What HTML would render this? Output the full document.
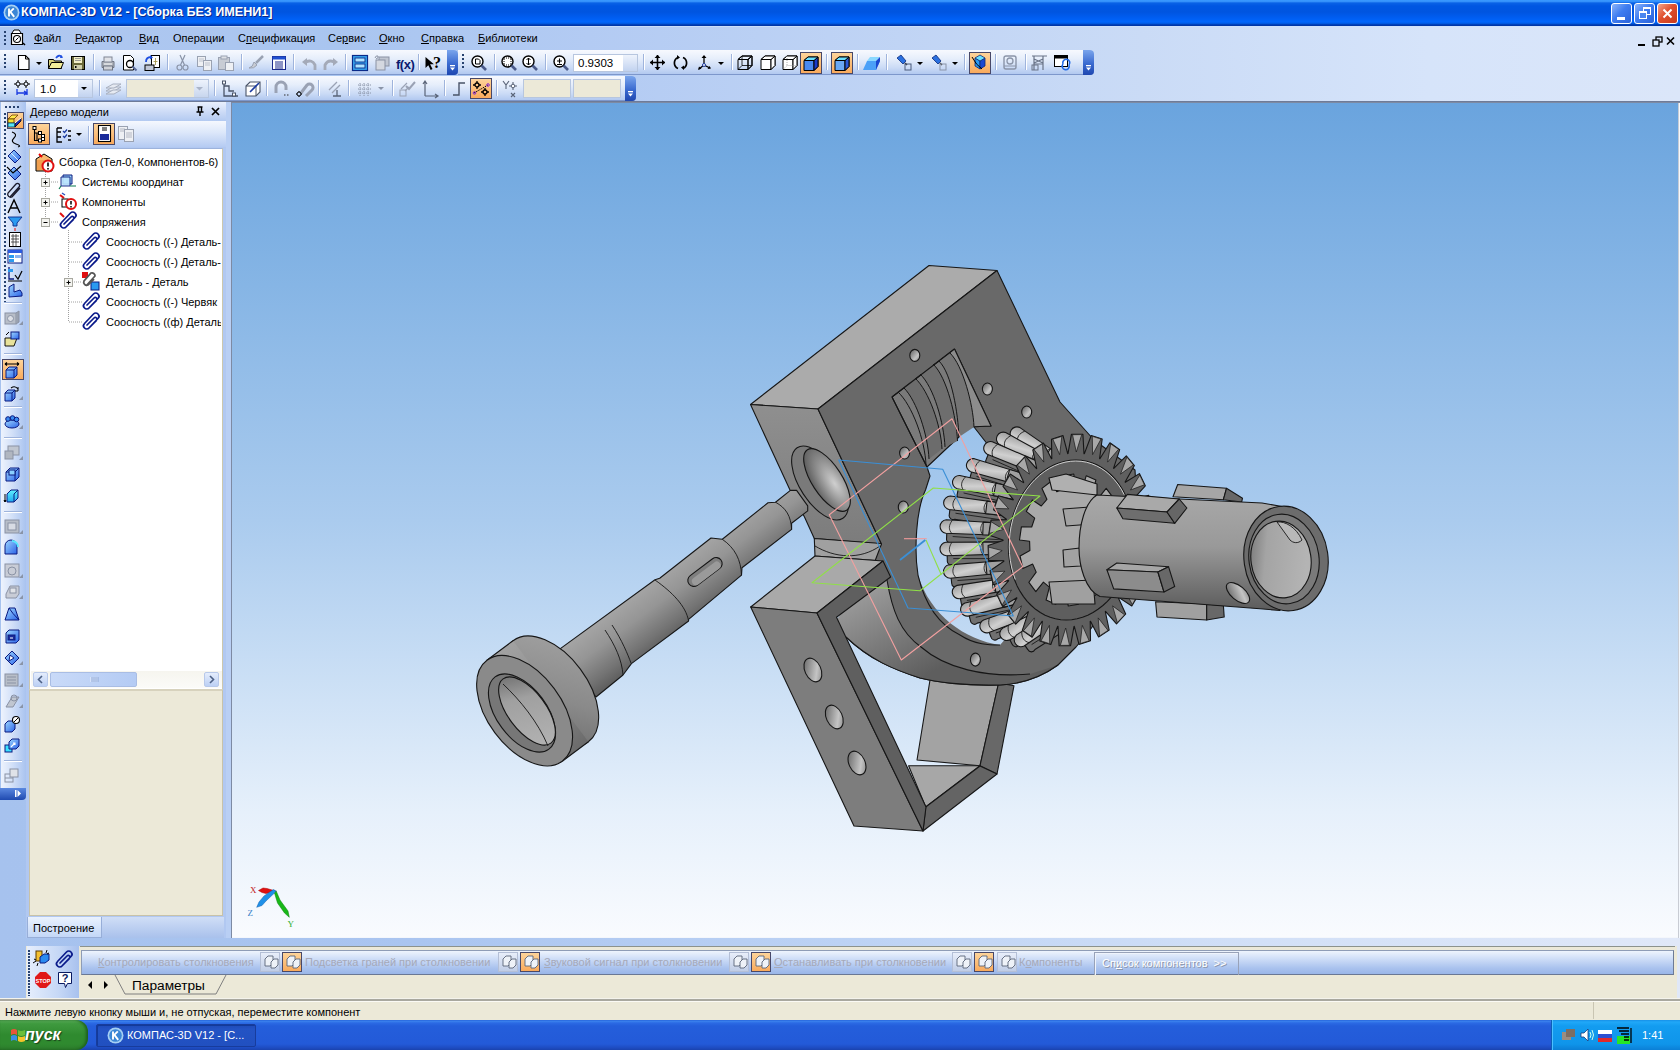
<!DOCTYPE html>
<html><head><meta charset="utf-8">
<style>
*{box-sizing:border-box;margin:0;padding:0}
html,body{width:1680px;height:1050px;overflow:hidden;background:#c9d9f4;font-family:"Liberation Sans",sans-serif;font-size:11px;color:#000}
.a{position:absolute}
.t{position:absolute;white-space:nowrap;line-height:1}
.tb{position:absolute;border-radius:0 4px 4px 0;background:linear-gradient(#f7f9fe 0,#e6eefb 35%,#cbdbf6 70%,#aec6ef 100%);box-shadow:inset 0 -1px #7d97cb}
.chev{position:absolute;width:11px;border-radius:0 4px 4px 0;background:linear-gradient(#7aa5ec,#3a6ad0 55%,#1f47b0)}
.sep{position:absolute;width:2px;height:16px;border-left:1px solid #9fb4dc;border-right:1px solid #fff}
.vsep{position:absolute;height:2px;width:18px;border-top:1px solid #9fb4dc;border-bottom:1px solid #fff}
.hl{position:absolute;background:linear-gradient(#fdd49a,#f9aa5c);border:1px solid #484868}
.gripv{position:absolute;width:2px;background:repeating-linear-gradient(#27426f 0 2px,transparent 2px 4px)}
.griph{position:absolute;height:2px;background:repeating-linear-gradient(90deg,#27426f 0 2px,transparent 2px 4px)}
</style></head><body>
<div class="a" style="left:0px;top:0px;width:1680px;height:26px;background:linear-gradient(#3a9aff 0,#3490fa 1.5px,#0a62e6 3px,#0056e2 6px,#0055e0 12px,#005ef2 18px,#0066fc 22px,#0058e0 23.5px,#0036a8 25px,#0036a8 26px)"></div>
<svg class="a" style="left:3px;top:4px" width="17" height="17" viewBox="0 0 17 17"><circle cx="8.5" cy="8.5" r="8" fill="#a6d0f4"/><circle cx="8.5" cy="8.5" r="6.3" fill="#3b86d6"/><path d="M6 4.5v8M6 9.2l4.8-4.8M7.6 8.2l3.6 4.6" stroke="#fff" stroke-width="1.9" fill="none"/></svg>
<div class="t" style="left:21px;top:6px;font-size:12.6px;font-weight:bold;color:#fff;text-shadow:1px 1px #0b2a8c">КОМПАС-3D V12 - [Сборка БЕЗ ИМЕНИ1]</div>
<div class="a" style="left:1611px;top:3px;width:21px;height:21px;border:1px solid #fff;border-radius:3px;background:linear-gradient(135deg,#8cb4fa,#3f7df0 45%,#2a62da)">
<div class="a" style="left:5px;top:13px;width:8px;height:3px;background:#fff"></div>
</div>
<div class="a" style="left:1634px;top:3px;width:21px;height:21px;border:1px solid #fff;border-radius:3px;background:linear-gradient(135deg,#8cb4fa,#3f7df0 45%,#2a62da)">
<div class="a" style="left:8px;top:3px;width:8px;height:8px;border:1px solid #fff;border-top-width:2px"></div><div class="a" style="left:4px;top:7px;width:8px;height:8px;border:1px solid #fff;border-top-width:2px;background:#4a86f0"></div>
</div>
<div class="a" style="left:1657px;top:3px;width:21px;height:21px;border:1px solid #fff;border-radius:3px;background:linear-gradient(135deg,#f3a58a,#e0502e 45%,#c83a1c)">
<svg class="a" style="left:3px;top:3px" width="13" height="13"><path d="M2.5 2.5L10.5 10.5M10.5 2.5L2.5 10.5" stroke="#fff" stroke-width="2"/></svg>
</div>
<div class="a" style="left:0px;top:26px;width:1680px;height:75px;background:linear-gradient(90deg,#b0c8f0 0,#a9c5f0 20%,#b3cbf3 35%,#cadbf6 68%,#d6e4fa 85%,#dbe6f9 100%)"></div>
<div class="a" style="left:0px;top:26px;width:1680px;height:1px;background:#cfe2fb;opacity:0.8"></div>
<div class="gripv" style="left:4px;top:31px;height:14px"></div>
<div class="t" style="left:34px;top:33px;text-decoration-thickness:1px"><u>Ф</u>айл</div>
<div class="t" style="left:75px;top:33px;text-decoration-thickness:1px"><u>Р</u>едактор</div>
<div class="t" style="left:139px;top:33px;text-decoration-thickness:1px"><u>В</u>ид</div>
<div class="t" style="left:173px;top:33px;text-decoration-thickness:1px">Операции</div>
<div class="t" style="left:238px;top:33px;text-decoration-thickness:1px">С<u>п</u>ецификация</div>
<div class="t" style="left:328px;top:33px;text-decoration-thickness:1px">Се<u>р</u>вис</div>
<div class="t" style="left:379px;top:33px;text-decoration-thickness:1px"><u>О</u>кно</div>
<div class="t" style="left:421px;top:33px;text-decoration-thickness:1px"><u>С</u>правка</div>
<div class="t" style="left:478px;top:33px;text-decoration-thickness:1px"><u>Б</u>иблиотеки</div>
<svg class="a" style="left:1636px;top:36px" width="44" height="12"><rect x="2" y="8" width="7" height="2" fill="#000"/><rect x="20" y="1" width="6" height="5" fill="none" stroke="#000" stroke-width="1.3"/><rect x="17" y="4" width="6" height="6" fill="#dfe8f8" stroke="#000" stroke-width="1.3"/><path d="M31 1.5l7 7M38 1.5l-7 7" stroke="#000" stroke-width="1.6"/></svg>
<div class="tb" style="left:0;top:50px;width:458px;height:25px"></div>
<div class="chev" style="left:447px;top:50px;height:25px"></div>
<div class="tb" style="left:458px;top:50px;width:636px;height:25px"></div>
<div class="chev" style="left:1083px;top:50px;height:25px"></div>
<div class="tb" style="left:0;top:76px;width:636px;height:25px"></div>
<div class="chev" style="left:625px;top:76px;height:25px"></div>
<svg class="a" style="left:450px;top:65px" width="7" height="8"><rect x="0" y="0" width="5" height="1.3" fill="#fff"/><path d="M0 2.5h5l-2.5 3z" fill="#fff"/></svg>
<svg class="a" style="left:1086px;top:65px" width="7" height="8"><rect x="0" y="0" width="5" height="1.3" fill="#fff"/><path d="M0 2.5h5l-2.5 3z" fill="#fff"/></svg>
<svg class="a" style="left:628px;top:91px" width="7" height="8"><rect x="0" y="0" width="5" height="1.3" fill="#fff"/><path d="M0 2.5h5l-2.5 3z" fill="#fff"/></svg>
<div class="gripv" style="left:4px;top:54px;height:15px"></div>
<div class="gripv" style="left:462px;top:54px;height:15px"></div>
<div class="gripv" style="left:4px;top:80px;height:15px"></div>
<div class="sep" style="left:93px;top:54px"></div>
<div class="sep" style="left:167px;top:54px"></div>
<div class="sep" style="left:241px;top:54px"></div>
<div class="sep" style="left:293px;top:54px"></div>
<div class="sep" style="left:345px;top:54px"></div>
<div class="sep" style="left:418px;top:54px"></div>
<div class="sep" style="left:494px;top:54px"></div>
<div class="sep" style="left:545px;top:54px"></div>
<div class="sep" style="left:643px;top:54px"></div>
<div class="sep" style="left:731px;top:54px"></div>
<div class="sep" style="left:826px;top:54px"></div>
<div class="sep" style="left:857px;top:54px"></div>
<div class="sep" style="left:886px;top:54px"></div>
<div class="sep" style="left:964px;top:54px"></div>
<div class="sep" style="left:995px;top:54px"></div>
<div class="sep" style="left:1025px;top:54px"></div>
<div class="sep" style="left:99px;top:80px"></div>
<div class="sep" style="left:214px;top:80px"></div>
<div class="sep" style="left:266px;top:80px"></div>
<div class="sep" style="left:318px;top:80px"></div>
<div class="sep" style="left:348px;top:80px"></div>
<div class="sep" style="left:392px;top:80px"></div>
<div class="sep" style="left:444px;top:80px"></div>
<div class="sep" style="left:496px;top:80px"></div>
<div class="a" style="left:34px;top:79px;width:59px;height:19px;background:#fff;border:1px solid #b7c6df"></div>
<div class="a" style="left:78px;top:80px;width:14px;height:17px;background:linear-gradient(#eef3fc,#c2d3f0)"></div>
<div class="t" style="left:40px;top:84px;font-size:11.5px">1.0</div>
<div class="a" style="left:126px;top:79px;width:83px;height:19px;background:#ece9d8;border:1px solid #b7c6df"></div>
<div class="a" style="left:194px;top:80px;width:14px;height:17px;background:linear-gradient(#eef3fc,#c8d6ee)"></div>
<div class="a" style="left:573px;top:54px;width:65px;height:18px;background:#fff;border:1px solid #b7c6df"></div>
<div class="a" style="left:623px;top:55px;width:14px;height:16px;background:linear-gradient(#eef3fc,#c2d3f0)"></div>
<div class="t" style="left:578px;top:58px;font-size:11.5px">0.9303</div>
<div class="a" style="left:523px;top:79px;width:48px;height:19px;background:#ece9d8;border:1px solid #b7c6df"></div>
<div class="a" style="left:573px;top:79px;width:48px;height:19px;background:#ece9d8;border:1px solid #b7c6df"></div>
<div class="hl" style="left:800px;top:52px;width:22px;height:22px"></div>
<div class="hl" style="left:831px;top:52px;width:22px;height:22px"></div>
<div class="hl" style="left:969px;top:52px;width:22px;height:22px"></div>
<div class="hl" style="left:470px;top:78px;width:22px;height:21px"></div>
<div class="a" style="left:0px;top:101px;width:1680px;height:1px;background:#6e7b98"></div>
<div class="a" style="left:0px;top:102px;width:1680px;height:898px;background:linear-gradient(90deg,#a6c2ee 0,#aac5f0 25%,#bcd2f4 50%,#d2e0f7 75%,#e0e8f8 100%)"></div>
<div class="a" style="left:1px;top:102px;width:25px;height:698px;background:linear-gradient(90deg,#eef3fd 0,#d2e0f8 45%,#a9c3ef 100%)"></div>
<div class="griph" style="left:5px;top:106px;height:2px;width:16px"></div>
<div class="gripv" style="left:4px;top:113px;height:190px"></div>
<div class="a" style="left:0px;top:788px;width:26px;height:12px;border-radius:0 0 4px 0;background:linear-gradient(#5a88e0,#1f4ab0)"></div>
<svg class="a" style="left:15px;top:790px" width="8" height="8"><rect x="0" y="0" width="1.5" height="7" fill="#fff"/><path d="M2.5 0v7l3.5-3.5z" fill="#fff"/></svg>
<div class="vsep" style="left:4px;top:302px"></div>
<div class="vsep" style="left:4px;top:353px"></div>
<div class="vsep" style="left:4px;top:406px"></div>
<div class="vsep" style="left:4px;top:437px"></div>
<div class="vsep" style="left:4px;top:511px"></div>
<div class="vsep" style="left:4px;top:760px"></div>
<div class="hl" style="left:7px;top:112px;width:17px;height:17px"></div>
<div class="hl" style="left:2px;top:359px;width:22px;height:21px"></div>
<div class="a" style="left:26px;top:102px;width:200px;height:836px;background:#b1c8f1"></div>
<div class="a" style="left:26px;top:102px;width:200px;height:19px;background:linear-gradient(#e9f0fd,#cbdaf6 55%,#b3caf1)"></div>
<div class="t" style="left:30px;top:107px;">Дерево модели</div>
<svg class="a" style="left:195px;top:106px" width="28" height="12"><path d="M2.5 1h5M3.5 1v5h3V1M1.5 6h7M5 6v4" stroke="#000" stroke-width="1.4" fill="none"/><path d="M17 2l7 7M24 2l-7 7" stroke="#000" stroke-width="1.7"/></svg>
<div class="a" style="left:26px;top:121px;width:200px;height:26px;background:linear-gradient(#f5f8fe,#dce7fa 45%,#b5cbf2)"></div>
<div class="hl" style="left:28px;top:123px;width:22px;height:22px"></div>
<div class="hl" style="left:93px;top:123px;width:22px;height:22px"></div>
<div class="sep" style="left:88px;top:126px"></div>
<div class="a" style="left:29px;top:148px;width:194px;height:542px;background:#fff;border:1px solid #cdc7ad;border-top-color:#9db3dc"></div>
<div class="a" style="left:31px;top:671px;width:191px;height:17px;background:linear-gradient(#f6f5ef,#fbfbf8)"></div>
<div class="a" style="left:33px;top:672px;width:15px;height:15px;border-radius:2px;background:linear-gradient(#e5edfc,#bcd0f4);border:1px solid #b8c9ea"></div>
<div class="a" style="left:204px;top:672px;width:15px;height:15px;border-radius:2px;background:linear-gradient(#e5edfc,#bcd0f4);border:1px solid #b8c9ea"></div>
<div class="a" style="left:50px;top:672px;width:87px;height:15px;border-radius:2px;background:linear-gradient(90deg,#c9daf8,#b4cbf4);border:1px solid #a9bde4"></div>
<svg class="a" style="left:33px;top:672px" width="190" height="15"><path d="M9 4l-3.5 3.5L9 11" stroke="#4d6185" stroke-width="1.6" fill="none"/><path d="M177 4l3.5 3.5L177 11" stroke="#4d6185" stroke-width="1.6" fill="none"/><path d="M58 5v5M60 5v5M62 5v5M64 5v5" stroke="#eef3fd" stroke-width="1"/><path d="M59 5v5M61 5v5M63 5v5M65 5v5" stroke="#8ea7d6" stroke-width="1"/></svg>
<div class="a" style="left:29px;top:689px;width:194px;height:227px;background:#ece9d8;border:1px solid #c8c2a8;border-top:2px solid #d7d2bd"></div>
<div class="a" style="left:27px;top:917px;width:75px;height:21px;background:linear-gradient(#eaf2fe,#c3d7f7);border:1px solid #97aed8;border-top:none"></div>
<div class="a" style="left:102px;top:917px;width:122px;height:21px;background:linear-gradient(#d0def6,#a9c1ec)"></div>
<div class="t" style="left:33px;top:923px;">Построение</div>
<div class="a" style="left:30px;top:150px;width:191px;height:190px;overflow:hidden">
<div class="t" style="left:29px;top:7px">Сборка (Тел-0, Компонентов-6)</div>
<div class="t" style="left:52px;top:27px">Системы координат</div>
<div class="t" style="left:52px;top:47px">Компоненты</div>
<div class="t" style="left:52px;top:67px">Сопряжения</div>
<div class="t" style="left:76px;top:87px">Соосность ((-) Деталь-</div>
<div class="t" style="left:76px;top:107px">Соосность ((-) Деталь-</div>
<div class="t" style="left:76px;top:127px">Деталь - Деталь</div>
<div class="t" style="left:76px;top:147px">Соосность ((-) Червяк</div>
<div class="t" style="left:76px;top:167px">Соосность ((ф) Деталь</div>
</div>
<div class="a" style="left:226px;top:102px;width:5px;height:836px;background:#b9cff4"></div>
<div class="a" style="left:231px;top:102px;width:1449px;height:836px;background:#f4f7fc;border-top:1px solid #7d8aa3;border-left:1px solid #7d8aa3"></div>
<div id="vp" class="a" style="left:232px;top:103px;width:1446px;height:834px;background:linear-gradient(#6aa4de 0,#aacbee 50%,#e6f0fb 85%,#f9fbfe 100%)"></div>
<div class="a" style="left:1678px;top:103px;width:2px;height:835px;background:#f4f8fd;border-left:1px solid #c8ccd4"></div>
<svg class="a" style="left:0;top:0" width="1680" height="1050" viewBox="0 0 1680 1050">
<defs>
<linearGradient id="gSky" gradientUnits="userSpaceOnUse" x1="0" y1="103" x2="0" y2="937"><stop offset="0" stop-color="#6aa4de"/><stop offset="0.5" stop-color="#aacbee"/><stop offset="0.85" stop-color="#e6f0fb"/><stop offset="1" stop-color="#f9fbfe"/></linearGradient>
<linearGradient id="gShaft" gradientUnits="userSpaceOnUse" x1="511.9" y1="686.5" x2="547.8" y2="734.6"><stop offset="0" stop-color="#a4a4a4"/><stop offset="0.35" stop-color="#959595"/><stop offset="0.75" stop-color="#737373"/><stop offset="1" stop-color="#5a5a5a"/></linearGradient>
<linearGradient id="gCyl" gradientUnits="userSpaceOnUse" x1="0" y1="495" x2="0" y2="610"><stop offset="0" stop-color="#a8a8a8"/><stop offset="0.45" stop-color="#999"/><stop offset="1" stop-color="#5c5c5c"/></linearGradient>
<radialGradient id="gBore" cx="0.65" cy="0.6" r="0.7"><stop offset="0" stop-color="#cfcfcf"/><stop offset="0.55" stop-color="#8e8e8e"/><stop offset="1" stop-color="#5a5a5a"/></radialGradient>
<linearGradient id="gHole" x1="0" y1="0" x2="1" y2="1"><stop offset="0" stop-color="#5a5a5a"/><stop offset="0.65" stop-color="#c4c4c4"/><stop offset="1" stop-color="#7a7a7a"/></linearGradient>
<linearGradient id="gLeft" x1="0" y1="0" x2="0" y2="1"><stop offset="0" stop-color="#8f8f8f"/><stop offset="1" stop-color="#7c7c7c"/></linearGradient>
<linearGradient id="gCap" x1="0" y1="0" x2="1" y2="1"><stop offset="0" stop-color="#9a9a9a"/><stop offset="0.45" stop-color="#d0d0d0"/><stop offset="1" stop-color="#8c8c8c"/></linearGradient>
<linearGradient id="gBand" gradientUnits="userSpaceOnUse" x1="850" y1="600" x2="900" y2="690"><stop offset="0" stop-color="#9a9a9a"/><stop offset="1" stop-color="#5e5e5e"/></linearGradient>
<linearGradient id="gBore2" x1="0" y1="0" x2="1" y2="0.3"><stop offset="0" stop-color="#707070"/><stop offset="0.35" stop-color="#a4a4a4"/><stop offset="1" stop-color="#b4b4b4"/></linearGradient>
<linearGradient id="gBore3" x1="0" y1="0" x2="1" y2="0.2"><stop offset="0" stop-color="#6a6a6a"/><stop offset="0.4" stop-color="#a0a0a0"/><stop offset="1" stop-color="#b0b0b0"/></linearGradient>
<linearGradient id="gRim" gradientUnits="userSpaceOnUse" x1="500" y1="650" x2="590" y2="760"><stop offset="0" stop-color="#a2a2a2"/><stop offset="0.5" stop-color="#8a8a8a"/><stop offset="1" stop-color="#626262"/></linearGradient>
</defs>
<g stroke="#161616" stroke-width="1.1" stroke-linejoin="round">
<polygon points="930,680 998.6,683 980,765.7 917,760" fill="#a3a3a3"/>
<polygon points="998.6,683 1014,685.7 997,774 980,765.7" fill="#686868"/>
<polygon points="908.6,765.7 980,765.7 925.7,807" fill="#a7a7a7"/>
<polygon points="923,831 997,774 980,766 925.7,807" fill="#646464"/>
<polygon points="1173,496.7 1177.7,484.5 1226.5,488.3 1223.4,499.7" fill="#a6a6a6"/>
<polygon points="1226.5,488.3 1242.5,498.2 1241.7,502 1223.4,499.7" fill="#686868"/>
<polygon points="1155.6,601.8 1206.7,604 1206.7,620 1157,617" fill="#a0a0a0"/>
<polygon points="1206.7,604 1223.4,605.6 1224.2,617 1206.7,620" fill="#686868"/>
<polygon points="750.5,404.5 929,265.5 997,270.5 818,409" fill="#ababab"/>
<polygon points="750.5,404.5 818,409 881.5,544 814.3,538.5 804.5,517 790,490" fill="url(#gLeft)"/>
<polygon points="814.3,538.5 881.5,543.5 883,561 815,556" fill="#a0a0a0"/>
<path d="M815,546 C835,558 860,560 880,546" fill="none" stroke-width="0.9"/>
<path d="M818,409 L997,270.5 L1060,402 L1094,440 L1135,470 L1140,560 L1090,630 L1076,647 L1058,665 C1040,678 1020,684 1000,685 C965,686 935,682 920,678 C895,670 870,660 846,637 L881.5,544 Z" fill="#696969"/>
<path d="M887,580 C892,610 900,632 921,647 C945,668 985,678 1030,674 L1058,665 C1040,678 1020,684 1000,685 C965,686 935,682 920,678 C895,670 870,660 846,637 L837,619 L883,561 Z" fill="url(#gBand)" stroke="none"/>
<path d="M887,580 C892,610 900,632 921,647 C945,668 985,678 1030,674" fill="none"/>
<path d="M1058,665 C1040,678 1020,684 1000,685 C965,686 935,682 920,678 C895,670 870,660 846,637" fill="none"/>
<path d="M925.5,490 L930,476 L927,467 L945,450 L959,437 L959,428 L974,427 L986.5,443 L1010,452 L1060,500 L1040,600 L1000,645 C965,640 930,615 918,575 C914,550 916,510 925.5,490 Z" fill="url(#gSky)" stroke="none"/>
<path d="M974,427 L986.5,443 L1010,452 M927,467 L930,476 L925.5,490 C916,510 914,550 918,575 C925,605 940,625 960,635 C975,645 990,645 1000,645" fill="none"/>
<polygon points="892,397 954.5,349 991,426 974.3,426.8 959,427.5 959,437 945,450 927,467" fill="#7a7a7a"/>
<polygon points="954.5,349 991,426 974.3,426.8 950,353" fill="#8c8c8c" stroke="none"/>
<path d="M954.5,349 L991,426 L974.3,426.8" fill="none"/>
<path d="M904,388 C917,401 928,436 929,459 L942,449 C941,426 929,391 915,378 Z" fill="#6c6c6c" stroke="none"/><path d="M920,374 C934,387 944,424 945,447 L957.5,441 C956.5,418 947,377 933,364 Z" fill="#6e6e6e" stroke="none"/><path d="M939,361 C952,374 958,414 959,437 L974,427 C973,404 963,366 950,353 Z" fill="#747474" stroke="none"/><g fill="none" stroke-width="1"><path d="M898,392 C912,405 925,440 926,465"/><path d="M904,388 C917,401 928,436 929,459"/><path d="M915,378 C929,391 941,426 942,449"/><path d="M920,374 C934,387 944,424 945,447"/><path d="M933,364 C947,377 956.5,418 957.5,441"/><path d="M939,361 C952,374 958,414 959,437"/><path d="M950,353 C963,366 973,404 974,427"/></g>
<path d="M892,397 L954.5,349 M892,397 L927,467" fill="none"/>
<g fill="url(#gHole)"><ellipse cx="914.8" cy="355.4" rx="5" ry="6"/><ellipse cx="987.4" cy="389" rx="5" ry="6"/><ellipse cx="1026.7" cy="412" rx="5" ry="6"/><ellipse cx="904.6" cy="453" rx="5" ry="6"/><ellipse cx="903.3" cy="507" rx="5" ry="6"/><ellipse cx="975.4" cy="659.6" rx="5" ry="6.5"/></g>
<ellipse cx="820" cy="483" rx="20" ry="42" transform="rotate(-33 820 483)" fill="#7a7a7a"/>
<ellipse cx="827" cy="480" rx="15" ry="36" transform="rotate(-33 827 480)" fill="url(#gBore)"/>
<g transform="translate(1010.0,430.0) rotate(33.4)"><path d="M8,2 L80,4 L80,17 L14,15 A4,4 0 0 1 8,11 Z" fill="#707070"/><path d="M14,9 L80,11" fill="none" stroke-width="0.8"/><path d="M7,-7.5 L72,-6 L72,6 L7,6 A6.8,6.8 0 0 1 7,-7.5 Z" fill="url(#gCap)"/><path d="M13,-7.2 C9.5,-2 9.5,2 13,6" fill="none" stroke-width="0.8"/><path d="M44,-6.6 L72,-6 L72,6 L44,6 Z" fill="#a0a0a0"/><path d="M44,-6.6 C41,-2 41,2 44,6" fill="none" stroke-width="0.8"/></g>
<g transform="translate(996.0,436.0) rotate(27.5)"><path d="M8,2 L80,4 L80,17 L14,15 A4,4 0 0 1 8,11 Z" fill="#707070"/><path d="M14,9 L80,11" fill="none" stroke-width="0.8"/><path d="M7,-7.5 L72,-6 L72,6 L7,6 A6.8,6.8 0 0 1 7,-7.5 Z" fill="url(#gCap)"/><path d="M13,-7.2 C9.5,-2 9.5,2 13,6" fill="none" stroke-width="0.8"/><path d="M44,-6.6 L72,-6 L72,6 L44,6 Z" fill="#a0a0a0"/><path d="M44,-6.6 C41,-2 41,2 44,6" fill="none" stroke-width="0.8"/></g>
<g transform="translate(983.0,446.0) rotate(22.1)"><path d="M8,2 L80,4 L80,17 L14,15 A4,4 0 0 1 8,11 Z" fill="#707070"/><path d="M14,9 L80,11" fill="none" stroke-width="0.8"/><path d="M7,-7.5 L72,-6 L72,6 L7,6 A6.8,6.8 0 0 1 7,-7.5 Z" fill="url(#gCap)"/><path d="M13,-7.2 C9.5,-2 9.5,2 13,6" fill="none" stroke-width="0.8"/><path d="M44,-6.6 L72,-6 L72,6 L44,6 Z" fill="#a0a0a0"/><path d="M44,-6.6 C41,-2 41,2 44,6" fill="none" stroke-width="0.8"/></g>
<g transform="translate(965.5,464.0) rotate(15.6)"><path d="M8,2 L80,4 L80,17 L14,15 A4,4 0 0 1 8,11 Z" fill="#707070"/><path d="M14,9 L80,11" fill="none" stroke-width="0.8"/><path d="M7,-7.5 L72,-6 L72,6 L7,6 A6.8,6.8 0 0 1 7,-7.5 Z" fill="url(#gCap)"/><path d="M13,-7.2 C9.5,-2 9.5,2 13,6" fill="none" stroke-width="0.8"/><path d="M44,-6.6 L72,-6 L72,6 L44,6 Z" fill="#a0a0a0"/><path d="M44,-6.6 C41,-2 41,2 44,6" fill="none" stroke-width="0.8"/></g>
<g transform="translate(951.5,481.5) rotate(10.8)"><path d="M8,2 L80,4 L80,17 L14,15 A4,4 0 0 1 8,11 Z" fill="#707070"/><path d="M14,9 L80,11" fill="none" stroke-width="0.8"/><path d="M7,-7.5 L72,-6 L72,6 L7,6 A6.8,6.8 0 0 1 7,-7.5 Z" fill="url(#gCap)"/><path d="M13,-7.2 C9.5,-2 9.5,2 13,6" fill="none" stroke-width="0.8"/><path d="M44,-6.6 L72,-6 L72,6 L44,6 Z" fill="#a0a0a0"/><path d="M44,-6.6 C41,-2 41,2 44,6" fill="none" stroke-width="0.8"/></g>
<g transform="translate(942.6,502.7) rotate(6.5)"><path d="M8,2 L80,4 L80,17 L14,15 A4,4 0 0 1 8,11 Z" fill="#707070"/><path d="M14,9 L80,11" fill="none" stroke-width="0.8"/><path d="M7,-7.5 L72,-6 L72,6 L7,6 A6.8,6.8 0 0 1 7,-7.5 Z" fill="url(#gCap)"/><path d="M13,-7.2 C9.5,-2 9.5,2 13,6" fill="none" stroke-width="0.8"/><path d="M44,-6.6 L72,-6 L72,6 L44,6 Z" fill="#a0a0a0"/><path d="M44,-6.6 C41,-2 41,2 44,6" fill="none" stroke-width="0.8"/></g>
<g transform="translate(939.0,527.0) rotate(2.2)"><path d="M8,2 L80,4 L80,17 L14,15 A4,4 0 0 1 8,11 Z" fill="#707070"/><path d="M14,9 L80,11" fill="none" stroke-width="0.8"/><path d="M7,-7.5 L72,-6 L72,6 L7,6 A6.8,6.8 0 0 1 7,-7.5 Z" fill="url(#gCap)"/><path d="M13,-7.2 C9.5,-2 9.5,2 13,6" fill="none" stroke-width="0.8"/><path d="M44,-6.6 L72,-6 L72,6 L44,6 Z" fill="#a0a0a0"/><path d="M44,-6.6 C41,-2 41,2 44,6" fill="none" stroke-width="0.8"/></g>
<g transform="translate(939.0,550.0) rotate(-1.7)"><path d="M8,2 L80,4 L80,17 L14,15 A4,4 0 0 1 8,11 Z" fill="#707070"/><path d="M14,9 L80,11" fill="none" stroke-width="0.8"/><path d="M7,-7.5 L72,-6 L72,6 L7,6 A6.8,6.8 0 0 1 7,-7.5 Z" fill="url(#gCap)"/><path d="M13,-7.2 C9.5,-2 9.5,2 13,6" fill="none" stroke-width="0.8"/><path d="M44,-6.6 L72,-6 L72,6 L44,6 Z" fill="#a0a0a0"/><path d="M44,-6.6 C41,-2 41,2 44,6" fill="none" stroke-width="0.8"/></g>
<g transform="translate(942.6,573.0) rotate(-5.8)"><path d="M8,2 L80,4 L80,17 L14,15 A4,4 0 0 1 8,11 Z" fill="#707070"/><path d="M14,9 L80,11" fill="none" stroke-width="0.8"/><path d="M7,-7.5 L72,-6 L72,6 L7,6 A6.8,6.8 0 0 1 7,-7.5 Z" fill="url(#gCap)"/><path d="M13,-7.2 C9.5,-2 9.5,2 13,6" fill="none" stroke-width="0.8"/><path d="M44,-6.6 L72,-6 L72,6 L44,6 Z" fill="#a0a0a0"/><path d="M44,-6.6 C41,-2 41,2 44,6" fill="none" stroke-width="0.8"/></g>
<g transform="translate(951.5,594.0) rotate(-10.0)"><path d="M8,2 L80,4 L80,17 L14,15 A4,4 0 0 1 8,11 Z" fill="#707070"/><path d="M14,9 L80,11" fill="none" stroke-width="0.8"/><path d="M7,-7.5 L72,-6 L72,6 L7,6 A6.8,6.8 0 0 1 7,-7.5 Z" fill="url(#gCap)"/><path d="M13,-7.2 C9.5,-2 9.5,2 13,6" fill="none" stroke-width="0.8"/><path d="M44,-6.6 L72,-6 L72,6 L44,6 Z" fill="#a0a0a0"/><path d="M44,-6.6 C41,-2 41,2 44,6" fill="none" stroke-width="0.8"/></g>
<g transform="translate(960.0,612.0) rotate(-14.1)"><path d="M8,2 L80,4 L80,17 L14,15 A4,4 0 0 1 8,11 Z" fill="#707070"/><path d="M14,9 L80,11" fill="none" stroke-width="0.8"/><path d="M7,-7.5 L72,-6 L72,6 L7,6 A6.8,6.8 0 0 1 7,-7.5 Z" fill="url(#gCap)"/><path d="M13,-7.2 C9.5,-2 9.5,2 13,6" fill="none" stroke-width="0.8"/><path d="M44,-6.6 L72,-6 L72,6 L44,6 Z" fill="#a0a0a0"/><path d="M44,-6.6 C41,-2 41,2 44,6" fill="none" stroke-width="0.8"/></g>
<g transform="translate(979.6,629.5) rotate(-20.5)"><path d="M8,2 L80,4 L80,17 L14,15 A4,4 0 0 1 8,11 Z" fill="#707070"/><path d="M14,9 L80,11" fill="none" stroke-width="0.8"/><path d="M7,-7.5 L72,-6 L72,6 L7,6 A6.8,6.8 0 0 1 7,-7.5 Z" fill="url(#gCap)"/><path d="M13,-7.2 C9.5,-2 9.5,2 13,6" fill="none" stroke-width="0.8"/><path d="M44,-6.6 L72,-6 L72,6 L44,6 Z" fill="#a0a0a0"/><path d="M44,-6.6 C41,-2 41,2 44,6" fill="none" stroke-width="0.8"/></g>
<g transform="translate(1000.0,638.0) rotate(-27.2)"><path d="M8,2 L80,4 L80,17 L14,15 A4,4 0 0 1 8,11 Z" fill="#707070"/><path d="M14,9 L80,11" fill="none" stroke-width="0.8"/><path d="M7,-7.5 L72,-6 L72,6 L7,6 A6.8,6.8 0 0 1 7,-7.5 Z" fill="url(#gCap)"/><path d="M13,-7.2 C9.5,-2 9.5,2 13,6" fill="none" stroke-width="0.8"/><path d="M44,-6.6 L72,-6 L72,6 L44,6 Z" fill="#a0a0a0"/><path d="M44,-6.6 C41,-2 41,2 44,6" fill="none" stroke-width="0.8"/></g>
<g transform="translate(1015.0,645.0) rotate(-34.2)"><path d="M8,2 L80,4 L80,17 L14,15 A4,4 0 0 1 8,11 Z" fill="#707070"/><path d="M14,9 L80,11" fill="none" stroke-width="0.8"/><path d="M7,-7.5 L72,-6 L72,6 L7,6 A6.8,6.8 0 0 1 7,-7.5 Z" fill="url(#gCap)"/><path d="M13,-7.2 C9.5,-2 9.5,2 13,6" fill="none" stroke-width="0.8"/><path d="M44,-6.6 L72,-6 L72,6 L44,6 Z" fill="#a0a0a0"/><path d="M44,-6.6 C41,-2 41,2 44,6" fill="none" stroke-width="0.8"/></g>
<polygon points="1138.9,540.0 1153.3,545.1 1151.0,559.9 1135.7,560.4 1135.6,560.8 1148.4,570.3 1143.5,584.2 1128.8,580.1 1128.7,580.4 1139.0,593.7 1131.8,606.0 1118.6,597.4 1118.3,597.7 1125.7,614.0 1116.5,623.9 1105.5,611.4 1105.3,611.6 1109.2,630.0 1098.6,637.0 1090.5,621.2 1090.2,621.3 1090.5,640.8 1079.0,644.4 1074.3,626.3 1074.0,626.4 1070.6,645.7 1059.1,645.8 1058.0,626.4 1057.6,626.4 1050.8,644.5 1039.8,641.0 1042.4,621.5 1042.1,621.3 1032.1,637.2 1022.3,630.3 1028.4,611.8 1028.2,611.6 1015.7,624.2 1007.6,614.4 1016.9,598.0 1016.7,597.7 1002.6,606.4 996.7,594.2 1008.6,580.8 1008.5,580.4 993.3,584.7 990.0,570.8 1003.9,561.2 1003.9,560.8 988.6,560.4 988.1,545.6 1003.1,540.4 1003.1,540.0 988.7,534.9 991.0,520.1 1006.3,519.6 1006.4,519.2 993.6,509.7 998.5,495.8 1013.2,499.9 1013.3,499.6 1003.0,486.3 1010.2,474.0 1023.4,482.6 1023.7,482.3 1016.3,466.0 1025.5,456.1 1036.5,468.6 1036.7,468.4 1032.8,450.0 1043.4,443.0 1051.5,458.8 1051.8,458.7 1051.5,439.2 1063.0,435.6 1067.7,453.7 1068.0,453.6 1071.4,434.3 1082.9,434.2 1084.0,453.6 1084.4,453.6 1091.2,435.5 1102.2,439.0 1099.6,458.5 1099.9,458.7 1109.9,442.8 1119.7,449.7 1113.6,468.2 1113.8,468.4 1126.3,455.8 1134.4,465.6 1125.1,482.0 1125.3,482.3 1139.4,473.6 1145.3,485.8 1133.4,499.2 1133.5,499.6 1148.7,495.3 1152.0,509.2 1138.1,518.8 1138.1,519.2 1153.4,519.6 1153.9,534.4 1138.9,539.6" fill="#606060"/>
<polygon points="1152.7,546.6 1151.0,558.3 1138.5,550.6" fill="#a8a8a8" stroke-width="0.7"/>
<polygon points="1147.6,571.6 1143.7,582.6 1133.3,571.2" fill="#a8a8a8" stroke-width="0.7"/>
<polygon points="1138.0,594.8 1132.3,604.5 1124.5,590.0" fill="#a8a8a8" stroke-width="0.7"/>
<polygon points="1124.6,614.8 1117.3,622.6 1112.6,605.9" fill="#a8a8a8" stroke-width="0.7"/>
<polygon points="1108.0,630.4 1099.6,635.9 1098.2,617.9" fill="#a8a8a8" stroke-width="0.7"/>
<polygon points="1089.2,640.8 1080.2,643.6 1082.3,625.4" fill="#a8a8a8" stroke-width="0.7"/>
<polygon points="1069.5,645.3 1060.3,645.4 1065.7,628.0" fill="#a8a8a8" stroke-width="0.7"/>
<polygon points="1049.7,643.7 1041.0,640.9 1049.4,625.4" fill="#a8a8a8" stroke-width="0.7"/>
<polygon points="1031.3,636.1 1023.5,630.7 1034.4,617.9" fill="#a8a8a8" stroke-width="0.7"/>
<polygon points="1015.1,622.9 1008.7,615.1 1021.5,605.9" fill="#a8a8a8" stroke-width="0.7"/>
<polygon points="1002.2,604.9 997.6,595.2 1011.5,590.0" fill="#a8a8a8" stroke-width="0.7"/>
<polygon points="993.3,583.1 990.7,572.1 1004.9,571.2" fill="#a8a8a8" stroke-width="0.7"/>
<polygon points="988.9,558.8 988.5,547.1 1002.2,550.6" fill="#a8a8a8" stroke-width="0.7"/>
<polygon points="989.3,533.4 991.0,521.7 1003.5,529.4" fill="#a8a8a8" stroke-width="0.7"/>
<polygon points="994.4,508.4 998.3,497.4 1008.7,508.8" fill="#a8a8a8" stroke-width="0.7"/>
<polygon points="1004.0,485.2 1009.7,475.5 1017.5,490.0" fill="#a8a8a8" stroke-width="0.7"/>
<polygon points="1017.4,465.2 1024.7,457.4 1029.4,474.1" fill="#a8a8a8" stroke-width="0.7"/>
<polygon points="1034.0,449.6 1042.4,444.1 1043.8,462.1" fill="#a8a8a8" stroke-width="0.7"/>
<polygon points="1052.8,439.2 1061.8,436.4 1059.7,454.6" fill="#a8a8a8" stroke-width="0.7"/>
<polygon points="1072.5,434.7 1081.7,434.6 1076.3,452.0" fill="#a8a8a8" stroke-width="0.7"/>
<polygon points="1092.3,436.3 1101.0,439.1 1092.6,454.6" fill="#a8a8a8" stroke-width="0.7"/>
<polygon points="1110.7,443.9 1118.5,449.3 1107.6,462.1" fill="#a8a8a8" stroke-width="0.7"/>
<polygon points="1126.9,457.1 1133.3,464.9 1120.5,474.1" fill="#a8a8a8" stroke-width="0.7"/>
<polygon points="1139.8,475.1 1144.4,484.8 1130.5,490.0" fill="#a8a8a8" stroke-width="0.7"/>
<polygon points="1148.7,496.9 1151.3,507.9 1137.1,508.8" fill="#a8a8a8" stroke-width="0.7"/>
<polygon points="1153.1,521.2 1153.5,532.9 1139.8,529.4" fill="#a8a8a8" stroke-width="0.7"/>
<polygon points="1133.4,540.0 1132.7,547.0 1131.6,553.9 1130.0,560.7 1128.0,567.4 1125.5,573.8 1122.6,580.0 1119.4,585.9 1115.7,591.4 1111.7,596.6 1107.4,601.3 1102.9,605.5 1098.0,609.3 1093.0,612.5 1087.8,615.2 1082.5,617.3 1077.1,618.8 1071.7,619.7 1066.2,620.0 1060.8,619.7 1055.4,618.8 1050.2,617.3 1045.1,615.2 1040.3,612.5 1035.6,609.3 1031.3,605.5 1027.2,601.3 1023.5,596.6 1020.1,591.4 1017.1,585.9 1014.6,580.0 1012.4,573.8 1010.7,567.4 1009.5,560.7 1008.7,553.9 1008.4,547.0 1008.6,540.0 1009.3,533.0 1010.4,526.1 1012.0,519.3 1014.0,512.6 1016.5,506.2 1019.4,500.0 1022.6,494.1 1026.3,488.6 1030.3,483.4 1034.6,478.7 1039.1,474.5 1044.0,470.7 1049.0,467.5 1054.2,464.8 1059.5,462.7 1064.9,461.2 1070.3,460.3 1075.8,460.0 1081.2,460.3 1086.6,461.2 1091.8,462.7 1096.9,464.8 1101.7,467.5 1106.4,470.7 1110.7,474.5 1114.8,478.7 1118.5,483.4 1121.9,488.6 1124.9,494.1 1127.4,500.0 1129.6,506.2 1131.3,512.6 1132.5,519.3 1133.3,526.1 1133.6,533.0" fill="#5e5e5e"/>
<polyline points="1015.3,579.5 1013.2,573.4 1011.5,567.0 1010.3,560.4 1009.5,553.7 1009.2,546.9 1009.4,540.0 1010.0,533.1 1011.1,526.3 1012.7,519.6 1014.7,513.0 1017.2,506.6 1020.0,500.5 1023.2,494.7 1026.8,489.2 1030.8,484.1 1035.0,479.5 1039.5,475.3 1044.3,471.6 1049.3,468.4 1054.4,465.8 1059.6,463.7 1065.0,462.2 1070.4,461.3 1075.7,461.0 1081.1,461.3 1086.4,462.2 1091.5,463.7 1096.5,465.8 1101.3,468.4 1105.9,471.6 1110.2,475.3 1114.2,479.5 1117.9,484.1 1121.3,489.2 1124.2,494.7" fill="none" stroke="#cfcfcf" stroke-width="1"/>
<polygon points="1122.5,540.0 1120.6,553.2 1110.3,553.0 1107.3,561.9 1115.7,568.6 1109.6,580.0 1100.7,574.0 1095.1,580.7 1100.0,591.6 1090.8,598.8 1085.2,588.3 1078.0,591.4 1078.6,604.3 1068.2,606.0 1066.9,593.0 1059.6,591.9 1055.7,604.3 1046.1,600.1 1049.4,587.2 1043.4,582.2 1035.8,591.6 1028.9,582.3 1036.2,572.1 1032.7,564.1 1022.9,568.6 1020.1,556.1 1029.9,550.6 1029.6,541.2 1019.5,540.0 1021.4,526.8 1031.7,527.0 1034.7,518.1 1026.3,511.4 1032.4,500.0 1041.3,506.0 1046.9,499.3 1042.0,488.4 1051.2,481.2 1056.8,491.7 1064.0,488.6 1063.4,475.7 1073.8,474.0 1075.1,487.0 1082.4,488.1 1086.3,475.7 1095.9,479.9 1092.6,492.8 1098.6,497.8 1106.2,488.4 1113.1,497.7 1105.8,507.9 1109.3,515.9 1119.1,511.4 1121.9,523.9 1112.1,529.4 1112.4,538.8" fill="#a9a9a9"/>
<polygon points="1049.0,478.0 1066.0,474.0 1097.0,484.0 1097.0,495.0 1052.0,490.0" fill="#b0b0b0"/>
<polygon points="1063.0,509.0 1090.0,507.0 1093.0,524.0 1066.0,526.0" fill="#a2a2a2"/>
<polygon points="1063.0,550.0 1080.0,548.0 1081.0,566.0 1064.0,567.0" fill="#a2a2a2"/>
<polygon points="1049.0,582.0 1093.0,580.0 1095.0,604.0 1052.0,604.0" fill="#a0a0a0"/>
<path d="M1097,495 L1262,503 L1282,506.5 L1280,610.5 L1260,608.7 L1100,596.5 C1085,590 1079,565 1079,548 C1079,525 1085,502 1097,495 Z" fill="url(#gCyl)"/>
<polygon points="1116.8,508 1127.4,494.4 1179.2,499 1167,512" fill="#a9a9a9"/>
<polygon points="1116.8,508 1167,512 1174.7,523.3 1122.9,518.8" fill="#6e6e6e"/>
<polygon points="1167,512 1179.2,499 1186.9,508 1174.7,523.3" fill="#666"/>
<polygon points="1106.9,569.8 1116.8,563 1168.6,566.8 1157.9,572" fill="#a6a6a6"/>
<polygon points="1106.9,569.8 1157.9,572 1164,592 1113.7,588.9" fill="#8c8c8c"/>
<polygon points="1157.9,572 1168.6,566.8 1174.7,586.6 1164,592" fill="#686868"/>
<ellipse cx="1238" cy="593" rx="7" ry="14" transform="rotate(-50 1238 593)" fill="url(#gHole)"/>
<ellipse cx="1286" cy="558.5" rx="42" ry="52.5" transform="rotate(-8 1286 558.5)" fill="#6c6c6c"/>
<ellipse cx="1284" cy="559" rx="35" ry="45" transform="rotate(-8 1284 559)" fill="#7a7a7a"/>
<ellipse cx="1281" cy="559.5" rx="30" ry="38.5" transform="rotate(-8 1281 559.5)" fill="url(#gBore2)"/>
<path d="M1277,522 C1285,521 1296,527 1302,540 C1298,544 1293,543 1290,540 Z" fill="#b8b8b8" stroke-width="0.9"/>
<polygon points="750.7,607 817,613 883,561 815,556" fill="#a9a9a9"/>
<polygon points="750.7,607 817,613 923,831 854,826" fill="#7d7d7d"/>
<polygon points="817,613 883,561 890.6,577 836.5,617.3 926,807 923,831" fill="#5f5f5f"/>
<g fill="url(#gHole)"><ellipse cx="812.9" cy="670" rx="8" ry="12.5" transform="rotate(-25 812.9 670)"/><ellipse cx="834.3" cy="717" rx="8" ry="12.5" transform="rotate(-25 834.3 717)"/><ellipse cx="857" cy="763" rx="8" ry="12.5" transform="rotate(-25 857 763)"/></g>
<polygon points="560.0,648.9 655.0,579.7 659.7,578.2 711.0,538.0 722.3,539.3 768.0,502.8 775.5,502.2 790.4,490.4 796.6,490.4 807.7,505.9 807.7,510.9 791.6,523.2 791.6,529.4 742.0,567.8 741.5,575.2 688.6,619.4 688.6,621.0 631.4,663.6 623.0,675.0 596.0,697.0" fill="url(#gShaft)"/>
<path d="M605,630 C615,645 622,660 623,675 M612,625 C622,640 628,655 631,663" fill="none" stroke-width="0.9"/>
<path d="M655,580 C672,592 686,606 688.6,621 M722.3,539.3 C735,548 741,560 741.5,575.2 M775.5,502.2 C786,508 791,516 791.6,529.4" fill="none" stroke-width="0.9"/>
<rect x="-20" y="-6" width="40" height="12" rx="6" transform="translate(705,572) rotate(-37)" fill="#7e7e7e"/>
<rect x="-17" y="-3.5" width="34" height="8" rx="4" transform="translate(706,573) rotate(-37)" fill="#9a9a9a" stroke="none"/>
<ellipse cx="550.7" cy="691.2" rx="63" ry="37" transform="rotate(53.3 550.7 691.2)" fill="url(#gRim)"/>
<polygon points="486.9,660.2 513,640.7 588.4,741.7 562.3,761.2" fill="url(#gRim)" stroke="none"/>
<path d="M486.9,660.2 L513,640.7 M588.4,741.7 L562.3,761.2" fill="none"/>
<ellipse cx="524.6" cy="710.7" rx="63" ry="37" transform="rotate(53.3 524.6 710.7)" fill="#8a8a8a"/>
<ellipse cx="522" cy="713" rx="45" ry="25" transform="rotate(53.3 522 713)" fill="#777"/>
<ellipse cx="527" cy="711" rx="40" ry="19" transform="rotate(53.3 527 711)" fill="url(#gBore3)"/>
<path d="M503,684 C520,700 538,722 548,746" fill="none" stroke-width="0.9"/>
<g fill="none" stroke-width="1.1">
<polygon points="952,418.7 829.3,514.7 901.3,660 1022.7,566.7" stroke="#f2a0a0"/>
<polygon points="838.7,460 942.7,469.3 1013.3,616 908,608" stroke="#3a8fd6"/>
<polygon points="812,582.7 933.3,488 1040,496 920,590.7" stroke="#90e048"/>
<path d="M904,538.7 L926.7,538.7" stroke="#f29a9a"/><path d="M926,540 L941.3,574.7" stroke="#90e048"/>
<path d="M900,560 L925.3,540" stroke="#3a8fd6" stroke-width="1.8"/>
</g>
</g>
<g>
<path d="M276.3,891.3 L266,893.5 L262,892.5 L258.5,890.5 L263,888 L267,888.5 Z" fill="#e01010" stroke="#a00" stroke-width="0.5"/>
<path d="M276.3,891.3 L266,901 L262,905.5 L256.7,907.3 L259,902 L264,896 L273.5,889.5 Z" fill="#1e90e8" stroke="#1060b0" stroke-width="0.5"/>
<path d="M276.3,891.3 L280,900 L288,911 L289.3,917.3 L284.5,913 L277.5,903 L274.5,893 Z" fill="#18b818" stroke="#0a800a" stroke-width="0.5"/>
<text x="250" y="893" font-size="9" fill="#c01818" font-family="Liberation Serif">X</text><text x="247.5" y="916" font-size="9" fill="#3a80c8" font-family="Liberation Serif">Z</text><text x="287.5" y="927" font-size="9" fill="#30b030" font-family="Liberation Serif">Y</text>
</g>
</svg>
<div class="a" style="left:26px;top:946px;width:1651px;height:53px;background:#ece9d8"></div>
<div class="a" style="left:80px;top:946px;width:1595px;height:1px;background:#8c928c"></div>
<div class="a" style="left:27px;top:946px;width:52px;height:53px;background:linear-gradient(90deg,#e6eefc,#c6d8f6 60%,#a8c1ee)"></div>
<div class="gripv" style="left:28px;top:950px;height:46px;background:repeating-linear-gradient(#27426f 0 2px,transparent 2px 3px)"></div>
<div class="a" style="left:81px;top:950px;width:1593px;height:25px;background:linear-gradient(#eef4fd 0,#d2e0f8 30%,#a9c2ee 75%,#9ab6e8 100%);border:1px solid #8e9cb6;border-bottom-color:#6a7894;border-right-color:#6c7a96"></div>
<div class="t" style="left:98px;top:957px;color:#a6a9b8"><u>К</u>онтролировать столкновения</div>
<div class="t" style="left:305px;top:957px;color:#a6a9b8">По<u>д</u>светка граней при столкновении</div>
<div class="t" style="left:544px;top:957px;color:#a6a9b8"><u>З</u>вуковой сигнал при столкновении</div>
<div class="t" style="left:774px;top:957px;color:#a6a9b8"><u>О</u>станавливать при столкновении</div>
<div class="t" style="left:1019px;top:957px;color:#a6a9b8">К<u>о</u>мпоненты</div>
<div class="a" style="left:260px;top:952px;width:20px;height:20px;background:linear-gradient(#e8eefa,#c0cde6);border:1px solid #b4bfd6"></div>
<div class="a" style="left:498px;top:952px;width:20px;height:20px;background:linear-gradient(#e8eefa,#c0cde6);border:1px solid #b4bfd6"></div>
<div class="a" style="left:729px;top:952px;width:20px;height:20px;background:linear-gradient(#e8eefa,#c0cde6);border:1px solid #b4bfd6"></div>
<div class="a" style="left:952px;top:952px;width:20px;height:20px;background:linear-gradient(#e8eefa,#c0cde6);border:1px solid #b4bfd6"></div>
<div class="a" style="left:997px;top:952px;width:20px;height:20px;background:linear-gradient(#e8eefa,#c0cde6);border:1px solid #b4bfd6"></div>
<div class="hl" style="left:282px;top:952px;width:20px;height:20px"></div>
<div class="hl" style="left:520px;top:952px;width:20px;height:20px"></div>
<div class="hl" style="left:751px;top:952px;width:20px;height:20px"></div>
<div class="hl" style="left:974px;top:952px;width:20px;height:20px"></div>
<div class="a" style="left:1094px;top:952px;width:145px;height:23px;border:1px solid #98a2b8;border-bottom:none;box-shadow:inset 1px 1px #eef3fc"></div>
<div class="t" style="left:1102px;top:958px;color:#fff;text-shadow:1px 1px 0 #8c96aa">Сп<u>и</u>сок компонентов&nbsp;&nbsp;&gt;&gt;</div>
<svg class="a" style="left:80px;top:975px" width="160" height="24"><path d="M12 6v8l-4-4z" fill="#000"/><path d="M24 6v8l4-4z" fill="#000"/><path d="M35 0 L45 19 L136 19 L146 0" fill="#ece9d8" stroke="#7f7f7f" stroke-width="1"/></svg>
<div class="t" style="left:132px;top:979px;font-size:13.7px">Параметры</div>
<div class="a" style="left:0px;top:998px;width:1680px;height:22px;background:#ece9d8;border-top:1px solid #f4f3ec;box-shadow:inset 0 2px #a9a89f, inset 0 3px #fbfaf5"></div>
<div class="a" style="left:1593px;top:1002px;width:1px;height:17px;background:#c9c5b2"></div>
<div class="t" style="left:5px;top:1007px;">Нажмите левую кнопку мыши и, не отпуская, переместите компонент</div>
<div class="a" style="left:0px;top:1020px;width:1680px;height:30px;background:linear-gradient(#1e5ad6 0,#3c84ee 1px,#2b6ae4 3px,#245edb 6px,#235ad8 24px,#1d4bc0 28px,#1a43ae 30px)"></div>
<div class="a" style="left:0px;top:1020px;width:88px;height:30px;border-radius:0 12px 12px 0;background:linear-gradient(#5fb35f 0,#3f9a3f 12%,#2f8a2f 50%,#2f8a2f 80%,#2b7a2b 100%);box-shadow:inset -2px 0 3px #1d5e1d"></div>
<svg class="a" style="left:10px;top:1026px" width="16" height="17"><path d="M1 4q3-2 6 0v5q-3-2-6 0z" fill="#e8553a"/><path d="M8 4q3 2 7 0v5q-4 2-7 0z" fill="#6abf3a"/><path d="M1 10q3-2 6 0v5q-3-2-6 0z" fill="#3a8ee8"/><path d="M8 10q3 2 7 0v5q-4 2-7 0z" fill="#f5c52a"/></svg>
<div class="t" style="left:25px;top:1027px;font-size:16px;font-weight:bold;font-style:italic;color:#fff;text-shadow:1px 1px 1px #1a401a">пуск</div>
<div class="a" style="left:96px;top:1024px;width:160px;height:23px;border-radius:2px;background:linear-gradient(#1f4ab8,#2353c4 20%,#2150c0);border:1px solid #183c9c;box-shadow:inset 1px 1px #123a9a"></div>
<svg class="a" style="left:107px;top:1027px" width="17" height="17" viewBox="0 0 17 17"><circle cx="8.5" cy="8.5" r="8" fill="#a6d0f4"/><circle cx="8.5" cy="8.5" r="6.3" fill="#3b86d6"/><path d="M6 4.5v8M6 9.2l4.8-4.8M7.6 8.2l3.6 4.6" stroke="#fff" stroke-width="1.9" fill="none"/></svg>
<div class="t" style="left:127px;top:1030px;color:#fff">КОМПАС-3D V12 - [С...</div>
<div class="a" style="left:1551px;top:1020px;width:129px;height:30px;background:linear-gradient(#1790e8 0,#20a8f8 2px,#139cf0 6px,#0f95ea 24px,#0b7fd6 30px);border-left:1px solid #0d5fb8;box-shadow:inset 1px 0 #4cc0ff"></div>
<svg class="a" style="left:1560px;top:1026px" width="80" height="18"><rect x="2" y="6" width="9" height="8" fill="#9a8d80"/><rect x="6" y="3" width="9" height="8" fill="#7c6e62"/><path d="M21 7h3l4-4v12l-4-4h-3z" fill="#fff" stroke="#1a3a7a" stroke-width="0.8"/><path d="M30 6q2 3 0 6M32 4q3 5 0 10" stroke="#cfe" stroke-width="1" fill="none"/><rect x="38" y="4" width="14" height="4" fill="#fff"/><rect x="38" y="8" width="14" height="4" fill="#2c4fd0"/><rect x="38" y="12" width="14" height="4" fill="#e02a2a"/><rect x="57" y="10" width="13" height="8" fill="#26e626"/><path d="M57 2h12M59 5h10M61 8h8M64 11h5M64 14h5" stroke="#000" stroke-width="1.6"/><path d="M71 2v15" stroke="#000" stroke-width="1.3"/></svg>
<div class="t" style="left:1642px;top:1030px;color:#fff">1:41</div>
<svg class="a" style="left:0;top:0" width="1680" height="1050" viewBox="0 0 1680 1050">
<defs><linearGradient id="ib" x1="0" y1="0" x2="1" y2="1"><stop offset="0" stop-color="#9fd8ff"/><stop offset="1" stop-color="#2b63e8"/></linearGradient><linearGradient id="ib2" x1="0" y1="0" x2="0" y2="1"><stop offset="0" stop-color="#5ff0ff"/><stop offset="1" stop-color="#1fa8f0"/></linearGradient></defs>
<g transform="translate(17,55)"><path d="M1.5 0.5h7l3.5 3.5v10.5h-10.5z" fill="#fff" stroke="#000" stroke-width="1.1"/><path d="M8.5 0.5v3.5h3.5" fill="none" stroke="#000"/></g>
<g transform="translate(36,62)"><path d="M0 0h6l-3 3z" fill="#000"/></g>
<g transform="translate(48,54)"><path d="M0.5 5.5h5l1 1.5h7v7.5h-13z" fill="#d8d27a" stroke="#000" stroke-width="1"/><path d="M0.5 14.5l3-6h12l-2.5 6z" fill="#f4ef9a" stroke="#000" stroke-width="1"/><path d="M8 4q3-4 6-1" stroke="#1f4fe0" stroke-width="1.8" fill="none"/><path d="M13 1l2 3h-3z" fill="#1f4fe0"/></g>
<g transform="translate(71,56)"><rect x="0.5" y="0.5" width="13" height="13" fill="#6b6a3a" stroke="#000"/><rect x="3" y="1" width="8" height="6" fill="#f2efc8"/><path d="M4 2.5h6M4 4.5h6" stroke="#888" stroke-width="0.8"/><rect x="3" y="9" width="8" height="4.5" fill="#d0cfae"/><rect x="4" y="10" width="1.5" height="2" fill="#000"/></g>
<g transform="translate(100,56)"><path d="M2 5.5h12v6h-12z" fill="#b0b4bc" stroke="#707684"/><rect x="4" y="1" width="8" height="5" fill="#e0e2e8" stroke="#808694"/><rect x="3.5" y="10" width="9" height="4" fill="#d0d2d8" stroke="#707684"/><path d="M4 8h8" stroke="#fff"/></g>
<g transform="translate(122,55)"><path d="M1.5 0.5h7l3 3v11.5h-10z" fill="#fff" stroke="#000" stroke-width="1"/><circle cx="8" cy="9" r="3.5" fill="#fff" stroke="#000" stroke-width="1.3"/><path d="M10.5 11.5l4 4" stroke="#5a6a9a" stroke-width="2"/></g>
<g transform="translate(144,55)"><rect x="7.5" y="0.5" width="8" height="12" fill="#fff" stroke="#000"/><path d="M11.5 3v7M9.5 6.5h4" stroke="#9a8a3a" stroke-width="0.8"/><rect x="1" y="10" width="9" height="5.5" fill="#bfc6d6" stroke="#000"/><path d="M2 7q0-5 5-5" stroke="#1f4fe0" stroke-width="1.8" fill="none"/><path d="M6 0l3 2.5-3 2z" fill="#1f4fe0"/></g>
<g transform="translate(176,55)"><circle cx="3.5" cy="12.5" r="2.5" stroke="#8a94a8" stroke-width="1.2" fill="none"/><circle cx="9.5" cy="12.5" r="2.5" stroke="#8a94a8" stroke-width="1.2" fill="none"/><path d="M4.5 10L9 0M8.5 10L4 0" stroke="#8a94a8" stroke-width="1.2" fill="none"/></g>
<g transform="translate(197,56)"><rect x="0.5" y="0.5" width="8" height="10" fill="#eef0f4" stroke="#9aa2b2"/><rect x="6.5" y="4.5" width="8" height="10" fill="#eef0f4" stroke="#9aa2b2"/><path d="M2 3h5M2 5h5M8 7h5M8 9h5" stroke="#b0b6c4" stroke-width="0.8"/></g>
<g transform="translate(218,56)"><rect x="0.5" y="1.5" width="11" height="12" fill="#c8ccd4" stroke="#9aa2b2"/><rect x="3" y="0" width="6" height="3" fill="#dde0e6" stroke="#9aa2b2"/><rect x="7.5" y="6.5" width="8" height="8" fill="#eef0f4" stroke="#9aa2b2"/></g>
<g transform="translate(248,55)"><path d="M15 1l-7 7" stroke="#9aa2b2" stroke-width="2.5"/><path d="M1 13q4-1 5-6l3 3q-3 4-8 3z" fill="#c8ccd4" stroke="#9aa2b2"/></g>
<g transform="translate(272,56)"><rect x="0.5" y="0.5" width="13" height="13" fill="#fff" stroke="#1a2a8a"/><rect x="0.5" y="0.5" width="13" height="3" fill="#1f4fd0"/><path d="M3 6h8M3 8h8M3 10h8M3 12h8" stroke="#1a2a8a" stroke-width="1"/></g>
<g transform="translate(302,57)"><path d="M4 5q6-3 9 3v5" stroke="#a4aab8" stroke-width="2.8" fill="none"/><path d="M0 5l5-4v8z" fill="#a4aab8"/></g>
<g transform="translate(322,57)"><path d="M12 5q-6-3-9 3v5" stroke="#a4aab8" stroke-width="2.8" fill="none"/><path d="M16 5l-5-4v8z" fill="#a4aab8"/></g>
<g transform="translate(352,55)"><rect x="0.5" y="0.5" width="15" height="15" fill="#3aa8f0" stroke="#0a2a8a" stroke-width="1.2"/><rect x="3" y="3" width="10" height="4" fill="#aee4ff" stroke="#0a2a8a" stroke-width="0.9"/><rect x="3" y="9" width="10" height="4" fill="#aee4ff" stroke="#0a2a8a" stroke-width="0.9"/></g>
<g transform="translate(374,55)"><rect x="5" y="2" width="10" height="9" fill="#c0c6d2" stroke="#8a92a4"/><rect x="2" y="5" width="9" height="10" fill="#d4d8e0" stroke="#8a92a4"/><path d="M1 3q1-3 3-2q1 2-2 3" stroke="#8a92a4" fill="none"/></g>
<text x="396" y="69" font-family="Liberation Sans" font-size="13" font-weight="bold" fill="#0a1a70" letter-spacing="-0.5">f(x)</text>
<g transform="translate(425,55)"><path d="M0.5 2v11l2.8-2.8 2.4 4.8 1.8-0.9-2.4-4.8h3.8z" fill="#000"/><text x="8" y="13" font-family="Liberation Serif" font-size="16" font-weight="bold" fill="#000">?</text></g>
<g transform="translate(471,55)"><circle cx="6.5" cy="6.5" r="5.5" fill="#fff" stroke="#000" stroke-width="1.4"/><path d="M4.5 4h3l1.5 1.5v3.5h-4.5z" fill="#fff" stroke="#000"/><path d="M10.5 10.5l4.5 4.5" stroke="#4a5a8a" stroke-width="2.6"/></g>
<g transform="translate(501,55)"><circle cx="6.5" cy="6.5" r="5.5" fill="#fff" stroke="#000" stroke-width="1.4"/><rect x="3" y="3" width="7" height="7" fill="none" stroke="#000" stroke-dasharray="1 1"/><path d="M10.5 10.5l4.5 4.5" stroke="#4a5a8a" stroke-width="2.6"/></g>
<g transform="translate(522,55)"><circle cx="6.5" cy="6.5" r="5.5" fill="#fff" stroke="#000" stroke-width="1.4"/><path d="M6.5 3v7M4.5 5l2-2 2 2M4.5 8l2 2 2-2" stroke="#000" fill="none"/><path d="M10.5 10.5l4.5 4.5" stroke="#4a5a8a" stroke-width="2.6"/></g>
<g transform="translate(553,55)"><circle cx="6.5" cy="6.5" r="5.5" fill="#fff" stroke="#000" stroke-width="1.4"/><path d="M6.5 3.5v5M4 6h5M4 9.5h5" stroke="#000" stroke-width="1.1"/><path d="M10.5 10.5l4.5 4.5" stroke="#4a5a8a" stroke-width="2.6"/></g>
<g transform="translate(650,55)"><path d="M7.5 0v15M0 7.5h15" stroke="#000" stroke-width="1.6"/><path d="M7.5 0l-3 3h6zM7.5 15l-3-3h6zM0 7.5l3-3v6zM15 7.5l-3-3v6z" fill="#000"/></g>
<g transform="translate(673,55)"><path d="M5 2.5a6 6 0 0 0 0 11M10 2.5a6 6 0 0 1 0 11" stroke="#000" stroke-width="1.7" fill="none"/><path d="M4 0l3 2.5-3 2zM11 15l-3-2.5 3-2z" fill="#000"/></g>
<g transform="translate(697,55)"><path d="M7 1v9l6 3M7 10l-5 4" stroke="#000" stroke-width="1.3" fill="none"/><path d="M7 0l-2.5 3h5zM14 13.5l-3.5 0.5 2-3zM1 15l1-3.5 2.5 2z" fill="#000"/><circle cx="7" cy="10" r="1.5" fill="#fff" stroke="#1a3aa0"/></g>
<g transform="translate(718,62)"><path d="M0 0h6l-3 3z" fill="#000"/></g>
<g transform="translate(737,55)"><path d="M1 4.5l4-3.5h10v9.5l-4 4h-10z" fill="none" stroke="#000" stroke-width="1"/><path d="M1 4.5h10l4-3.5" fill="none" stroke="#000"/><path d="M11 4.5v10" stroke="#000"/><path d="M11 4.5l4-3.5v9.5l-4 4z" fill="none" stroke="#000"/><path d="M1 4.5l4-3.5h10l-4 3.5z" fill="none" stroke="#000"/><path d="M5 1v9.5h10M5 10.5l-4 4" stroke="#000" stroke-width="0.8" fill="none"/></g>
<g transform="translate(760,55)"><path d="M1 4.5l4-3.5h10v9.5l-4 4h-10z" fill="#fff" stroke="#000" stroke-width="1"/><path d="M1 4.5h10l4-3.5" fill="none" stroke="#000"/><path d="M11 4.5v10" stroke="#000"/><path d="M11 4.5l4-3.5v9.5l-4 4z" fill="#fff" stroke="#000"/><path d="M1 4.5l4-3.5h10l-4 3.5z" fill="#fff" stroke="#000"/></g>
<g transform="translate(782,55)"><path d="M1 4.5l4-3.5h10v9.5l-4 4h-10z" fill="#fff" stroke="#000" stroke-width="1"/><path d="M1 4.5h10l4-3.5" fill="none" stroke="#000"/><path d="M11 4.5v10" stroke="#000"/><path d="M11 4.5l4-3.5v9.5l-4 4z" fill="#fff" stroke="#000"/><path d="M1 4.5l4-3.5h10l-4 3.5z" fill="#fff" stroke="#000"/><path d="M5 1v9.5h10M5 10.5l-4 4" stroke="#999" stroke-width="0.8" stroke-dasharray="1 1" fill="none"/></g>
<g transform="translate(803,56)"><path d="M1 4.5l4-3.5h10v9.5l-4 4h-10z" fill="#4a8af0" stroke="#000" stroke-width="1"/><path d="M1 4.5h10l4-3.5" fill="none" stroke="#000"/><path d="M11 4.5v10" stroke="#000"/><path d="M11 4.5l4-3.5v9.5l-4 4z" fill="#1a3ac8" stroke="#000"/><path d="M1 4.5l4-3.5h10l-4 3.5z" fill="#6ae0ff" stroke="#000"/></g>
<g transform="translate(834,56)"><path d="M1 4.5l4-3.5h10v9.5l-4 4h-10z" fill="#6aa8f4" stroke="#000" stroke-width="1"/><path d="M1 4.5h10l4-3.5" fill="none" stroke="#000"/><path d="M11 4.5v10" stroke="#000"/><path d="M11 4.5l4-3.5v9.5l-4 4z" fill="#2a58d8" stroke="#000"/><path d="M1 4.5l4-3.5h10l-4 3.5z" fill="#6ae0ff" stroke="#000"/></g>
<g transform="translate(863,56)"><path d="M0 14l4-9h13l-4 9z" fill="#4aa0f8"/><path d="M4 5l3-4h10l-4 4z" fill="#8ad8ff"/><path d="M13 14l4-9v-4l-4 4z" fill="#1a48d0"/></g>
<g transform="translate(896,55)"><path d="M1 3l4-3 5 6-3 3z" fill="#2a70e0" stroke="#0a2a7a" stroke-width="0.8"/><path d="M9 8l2 2" stroke="#333" stroke-width="1.5"/><rect x="9" y="9" width="6" height="6" fill="none" stroke="#4a5a7a"/></g>
<g transform="translate(917,62)"><path d="M0 0h6l-3 3z" fill="#000"/></g>
<g transform="translate(931,55)"><path d="M1 3l4-3 5 6-3 3z" fill="#2a70e0" stroke="#0a2a7a" stroke-width="0.8"/><path d="M9 8l2 2" stroke="#333" stroke-width="1.5"/><rect x="9" y="9" width="6" height="6" fill="none" stroke="#8a94a8"/></g>
<g transform="translate(952,62)"><path d="M0 0h6l-3 3z" fill="#000"/></g>
<g transform="translate(972,55)"><path d="M3 3l5 3v8l-5-3z" fill="#2a9af0" stroke="#0a2a7a" stroke-width="0.8"/><path d="M8 6l5-3v8l-5 3z" fill="#1a48d0" stroke="#0a2a7a" stroke-width="0.8"/><path d="M3 3l5-3 5 3-5 3z" fill="#6ae0ff" stroke="#0a2a7a" stroke-width="0.8"/><path d="M0 2q4 8 10 12" stroke="#000" fill="none"/></g>
<g transform="translate(1002,55)"><rect x="2" y="1" width="12" height="13" rx="2" fill="none" stroke="#8a94a8" stroke-width="1.4"/><circle cx="8" cy="6" r="3" fill="none" stroke="#8a94a8" stroke-width="1.3"/><path d="M2 11h12" stroke="#8a94a8"/></g>
<g transform="translate(1031,55)"><path d="M1 1h15M3 1v14M12 1v14M3 4l9 4M12 4l-9 4M3 9h9" stroke="#6a7488" stroke-width="1.2" fill="none"/><rect x="1" y="10" width="6" height="5" fill="none" stroke="#6a7488"/></g>
<g transform="translate(1054,55)"><rect x="0.5" y="0.5" width="13" height="11" fill="#fff" stroke="#000"/><rect x="0.5" y="0.5" width="13" height="3" fill="#000"/><path d="M9 9a3.5 3.5 0 1 1 6 1M15 10a3.5 3.5 0 1 1-6-1" stroke="#1f6ae8" stroke-width="1.6" fill="none"/></g>
<g transform="translate(14,80)"><path d="M4 3h8M8 0v6M4 0v6" stroke="none"/><circle cx="4" cy="4" r="2" fill="none" stroke="#000"/><circle cx="12" cy="4" r="2" fill="none" stroke="#000"/><path d="M0 4h2M6 4h4M14 4h2M4 0v2M4 6v2M12 0v2M12 6v2" stroke="#000"/><path d="M3 9v6M13 9v6M3 13h10M10 11l3 2-3 2" stroke="#1a3ae0" stroke-width="1.3" fill="none"/></g>
<g transform="translate(81,87)"><path d="M0 0h6l-3 3z" fill="#000"/></g>
<g transform="translate(105,81)"><path d="M1 10l7-4h8l-7 4z" fill="#e6eaf2" stroke="#a8b0c0"/><path d="M1 7l7-4h8l-7 4z" fill="#e6eaf2" stroke="#a8b0c0"/><path d="M1 13l7-4h8l-7 4z" fill="#e6eaf2" stroke="#a8b0c0"/></g>
<g transform="translate(196,87)"><path d="M0 0h7l-3.5 3.5z" fill="#aab4c8"/></g>
<g transform="translate(222,81)"><path d="M2 1v14h14M2 5h5v5h5" stroke="#4a5468" stroke-width="1.3" fill="none"/><rect x="0.5" y="0" width="3" height="3" fill="#fff" stroke="#4a5468"/><rect x="10.5" y="12" width="3" height="3" fill="#fff" stroke="#4a5468"/></g>
<g transform="translate(245,81)"><path d="M1 5l4-4h10v10l-4 4h-10z" fill="#fff" stroke="#4a5468" stroke-width="1.1"/><path d="M1 5h10v10M11 5l4-4" stroke="#4a5468" fill="none"/><path d="M5 11l9-9" stroke="#1a3aa0" stroke-width="1.6"/></g>
<g transform="translate(273,81)"><path d="M3 12V6a5 5 0 0 1 10 0v3" stroke="#9aa2b4" stroke-width="3" fill="none"/><path d="M11 14h1.5M14 14h1.5" stroke="#333" stroke-width="1.2"/></g>
<g transform="translate(296,81)"><path d="M5 12l6-8a3.5 3.5 0 0 1 5 5l-6 6" stroke="#9aa2b4" stroke-width="3" fill="none"/><circle cx="3" cy="13" r="2" fill="none" stroke="#000"/><path d="M0 13h1M5 13h1M3 10v1M3 15v1" stroke="#000"/></g>
<g transform="translate(327,81)"><path d="M2 9l8-8M5 12l8-8" stroke="#9aa2b4" stroke-width="1.3"/><path d="M6 15h8M10 9v6" stroke="#5a6478" stroke-width="1.3"/></g>
<g transform="translate(357,81)"><path d="M3 2v13M7 2v13M11 2v13M1 4h13M1 8h13M1 12h13" stroke="#8a94a8" stroke-width="1" stroke-dasharray="1.2 0.8"/></g>
<g transform="translate(378,87)"><path d="M0 0h6l-3 3z" fill="#8a94a8"/></g>
<g transform="translate(399,81)"><path d="M2 8l6-6M6 10l4-4" stroke="#9aa2b4" stroke-width="1.2"/><path d="M7 5l3 3 6-7" stroke="#9aa2b4" stroke-width="2" fill="none"/><rect x="1" y="9" width="6" height="6" fill="none" stroke="#9aa2b4"/></g>
<g transform="translate(422,81)"><path d="M3 15V1M3 15h13M1 3l2-3 2 3M13 13l3 2-3 2" stroke="#5a6478" stroke-width="1.2" fill="none"/></g>
<g transform="translate(453,82)"><path d="M0 13h6V1h6" stroke="#4a5468" stroke-width="1.4" fill="none"/></g>
<g transform="translate(473,80)"><circle cx="4" cy="5" r="2" fill="none" stroke="#000" stroke-width="1.3"/><path d="M0 5h2M6 5h2M4 1v2M4 7v2" stroke="#000" stroke-width="1.3"/><circle cx="12" cy="12" r="2" fill="none" stroke="#000" stroke-width="1.3"/><path d="M8 12h2M14 12h2M12 8v2M12 14v2" stroke="#000" stroke-width="1.3"/><path d="M1 13L15 5" stroke="#000" stroke-dasharray="1.5 1"/><circle cx="1.5" cy="13" r="1.3" fill="none" stroke="#8a2ad0"/><circle cx="15" cy="5" r="1.3" fill="none" stroke="#8a2ad0"/></g>
<g transform="translate(503,81)"><path d="M0 0l3 4 3-4M3 4v4M10 1v8M6 5h8M8 12l4 4M12 12l-4 4" stroke="#5a6478" stroke-width="1.1" fill="none"/><circle cx="10" cy="5" r="1.8" fill="#fff" stroke="#5a6478"/></g>
<g transform="translate(10,30)"><path d="M1.5 3.5h11v11h-11z" fill="#fff" stroke="#000" stroke-width="1.2"/><path d="M2 3l2-3h5l2 3" fill="#fff" stroke="#000"/><circle cx="7" cy="9" r="3.5" fill="none" stroke="#000" stroke-width="1.1"/><path d="M5.5 10.5l3-3" stroke="#000"/><path d="M13 13l2 2" stroke="#000" stroke-width="1.5"/></g>
<g transform="translate(7,113)"><path d="M1 6l4-4h6l-4 4z" fill="#ffe84a" stroke="#6a3a00" stroke-width="0.8"/><rect x="1" y="6" width="6" height="4" fill="#f4e430" stroke="#6a3a00" stroke-width="0.8"/><rect x="1" y="10" width="7" height="4" fill="#5ae6f4" stroke="#003a6a" stroke-width="0.8"/><path d="M8 14l6-6v-3l-6 6z" fill="#1a2ac0" stroke="#000" stroke-width="0.8"/><path d="M8 10l6-5" stroke="#fff"/></g>
<g transform="translate(7,132)"><path d="M5 0q6 2 2 6t2 6 2 3" stroke="#000" stroke-width="1.1" fill="none"/></g>
<g transform="translate(7,148)"><path d="M1 8l6-6 7 7-6 6z" fill="url(#ib)" stroke="#0a1a80" stroke-width="1"/><path d="M4 5l7 7" stroke="#fff" stroke-width="0.8"/></g>
<g transform="translate(7,165)"><path d="M1 8l6-6 7 7-6 6z" fill="url(#ib)" stroke="#0a1a80" stroke-width="1"/><path d="M0 2l6 6 8-7" stroke="#000" stroke-width="1.2" fill="none"/></g>
<g transform="translate(7,183)"><path d="M3 14L12 4a2 2 0 0 0-3-3L1 10a3 3 0 0 0 4 4l8-9" stroke="#1a1a2a" stroke-width="1.3" fill="none"/></g>
<g transform="translate(7,199)"><path d="M1 14L7 1l6 13M3 9h8" stroke="#000" stroke-width="1.4" fill="none"/></g>
<g transform="translate(7,216)"><path d="M1 1h14l-5 6v3h-4v-3z" fill="#2a9af0" stroke="#0a2a8a" stroke-width="0.9"/><path d="M8 12v3" stroke="#e02a2a" stroke-width="1.2"/></g>
<g transform="translate(7,232)"><rect x="2.5" y="0.5" width="11" height="14" fill="#fff" stroke="#000"/><path d="M4 4h8M4 7h8M4 10h8M6 2v12M9 2v12" stroke="#333" stroke-width="0.8"/></g>
<g transform="translate(7,249)"><rect x="1" y="1" width="14" height="13" fill="#fff" stroke="#0a1a80"/><rect x="1" y="1" width="14" height="3" fill="#2a5ae0"/><rect x="2" y="6" width="5" height="3" fill="#2a9af0"/><rect x="8" y="6" width="6" height="3" fill="#8ab4f0"/><rect x="2" y="10" width="5" height="3" fill="#2a9af0"/></g>
<g transform="translate(7,266)"><path d="M2 1v12h5" stroke="#0a1a80" stroke-width="1.3" fill="none"/><rect x="1" y="3" width="5" height="3" fill="#2a9af0"/><path d="M8 9l3 4 4-8" stroke="#000" stroke-width="1.2" fill="none"/><path d="M1 15h14" stroke="#000"/></g>
<g transform="translate(7,283)"><path d="M2 14V4l5-3v8l6-2 2 3v3z" fill="url(#ib)" stroke="#0a1a80" stroke-width="1"/></g>
<g transform="translate(4,310)"><rect x="1" y="3" width="11" height="11" fill="#b8bec8" stroke="#8a92a4" stroke-width="1"/><circle cx="6.5" cy="8.5" r="3" fill="#dde0e6" stroke="#8a92a4" stroke-width="1"/><path d="M12 3l3-2v11l-3 2" fill="#9aa2b0" stroke="#8a92a4" stroke-width="1"/></g>
<g transform="translate(4,332)"><path d="M1 6h12l-3 8h-9z" fill="#e8e29a" stroke="#000" stroke-width="0.9"/><rect x="7" y="0" width="8" height="7" fill="url(#ib)" stroke="#0a1a80" stroke-width="1"/><path d="M2 3l3-3" stroke="#000"/></g>
<g transform="translate(4,363)"><path d="M1 1h14M1 1l2-1.5M1 1l2 1.5M15 1l-2-1.5M15 1l-2 1.5" stroke="#000" stroke-width="1.1" fill="none"/><path d="M2 7l3-3h8v8l-3 3h-8z" fill="url(#ib)" stroke="#0a1a80" stroke-width="1"/><path d="M2 7h8v8M10 7l3-3" stroke="#0a1a80" fill="none"/></g>
<g transform="translate(4,385)"><path d="M1 8l3-3h7v8l-3 3h-7z" fill="url(#ib)" stroke="#0a1a80" stroke-width="1"/><path d="M1 8h7v8M8 8l3-3" stroke="#0a1a80" fill="none"/><path d="M7 3q4-3 7 1" stroke="#000" stroke-width="1.1" fill="none"/><path d="M14 2v4h-3" stroke="#000" fill="none"/></g>
<g transform="translate(4,414)"><ellipse cx="8" cy="10" rx="7" ry="4" fill="url(#ib)" stroke="#0a1a80" stroke-width="1"/><circle cx="4" cy="5" r="2.3" fill="#3a8af0" stroke="#0a1a80" stroke-width="1"/><circle cx="8.5" cy="4" r="2.3" fill="#3a8af0" stroke="#0a1a80" stroke-width="1"/><circle cx="12.5" cy="5.5" r="2.3" fill="#3a8af0" stroke="#0a1a80" stroke-width="1"/></g>
<g transform="translate(4,445)"><rect x="4" y="1" width="11" height="9" fill="#c0c6d0" stroke="#8a92a4" stroke-width="1"/><rect x="1" y="6" width="8" height="8" fill="#b0b6c0" stroke="#8a92a4" stroke-width="1"/></g>
<g transform="translate(4,466)"><path d="M2 6l4-4h9v9l-4 4h-9z" fill="url(#ib)" stroke="#0a1a80" stroke-width="1"/><path d="M2 6h9v9M11 6l4-4" stroke="#0a1a80" fill="none"/><rect x="5" y="4" width="6" height="5" fill="#8ad0ff" stroke="#0a1a80" stroke-width="1"/></g>
<g transform="translate(4,488)"><path d="M3 6l4-4h7v8l-4 4h-7z" fill="url(#ib2)" stroke="#0a1a80" stroke-width="1"/><path d="M10 6v8M10 6l4-4" stroke="#0a1a80" fill="none"/><path d="M1 6v8M0 12l1 2 1-2" stroke="#000"/></g>
<g transform="translate(4,519)"><rect x="1" y="1" width="14" height="13" fill="#b8bec8" stroke="#8a92a4" stroke-width="1"/><rect x="4" y="4" width="8" height="7" fill="#d8dce4" stroke="#8a92a4" stroke-width="1"/></g>
<g transform="translate(4,540)"><path d="M1 14V6a6 6 0 0 1 12 0v8z" fill="url(#ib)" stroke="#0a1a80" stroke-width="1"/><path d="M8 1a6 6 0 0 1 6 6" stroke="#5ae6ff" stroke-width="2" fill="none"/></g>
<g transform="translate(4,563)"><rect x="1" y="1" width="14" height="13" fill="#c8ccd6" stroke="#8a92a4" stroke-width="1"/><circle cx="8" cy="8" r="4" fill="none" stroke="#8a92a4" stroke-width="1"/></g>
<g transform="translate(4,584)"><path d="M2 10l4-8h9v8l-3 4h-10z" fill="#c8ccd6" stroke="#8a92a4" stroke-width="1"/><rect x="6" y="4" width="6" height="5" fill="#e0e3e8" stroke="#8a92a4" stroke-width="1"/></g>
<g transform="translate(4,606)"><path d="M1 14l4-12h6l4 12z" fill="url(#ib)" stroke="#0a1a80" stroke-width="1"/><path d="M5 2q3 5 10 12" stroke="#0a1a80" fill="none"/></g>
<g transform="translate(4,628)"><path d="M2 5l3-3h10v10l-3 3h-10z" fill="url(#ib)" stroke="#0a1a80" stroke-width="1"/><rect x="4" y="7" width="7" height="5" fill="#1a2a9a" stroke="#0a1a80" stroke-width="1"/><path d="M6 10h3" stroke="#fff"/></g>
<g transform="translate(4,650)"><path d="M1 8l7-7 7 7-7 7z" fill="url(#ib)" stroke="#0a1a80" stroke-width="1"/><path d="M5 11l5-3-4-3z" fill="#fff" stroke="#0a1a80"/></g>
<g transform="translate(4,672)"><rect x="1" y="2" width="13" height="12" fill="#b8bec8" stroke="#8a92a4" stroke-width="1"/><path d="M3 5h9M3 8h9M3 11h9" stroke="#8a92a4"/></g>
<g transform="translate(4,693)"><path d="M2 14l6-10h7l-6 10z" fill="#c0c6d0" stroke="#8a92a4" stroke-width="1"/><circle cx="10" cy="5" r="3" fill="none" stroke="#8a92a4" stroke-width="1"/></g>
<g transform="translate(4,716)"><path d="M1 8l3-3h7v8l-3 3h-7z" fill="url(#ib)" stroke="#0a1a80" stroke-width="1"/><circle cx="12" cy="4" r="3.5" fill="#fff" stroke="#000" stroke-width="1.1"/><path d="M10 6l4-4" stroke="#000"/></g>
<g transform="translate(4,737)"><rect x="1" y="8" width="7" height="7" fill="#3ae0ff" stroke="#0a1a80" stroke-width="1"/><path d="M5 5l3-3h7v7l-3 3h-7z" fill="url(#ib)" stroke="#0a1a80" stroke-width="1"/><path d="M7 10l4-4M9 6h2v2" stroke="#fff" stroke-width="1.1" fill="none"/></g>
<g transform="translate(4,768)"><rect x="1" y="6" width="8" height="8" fill="none" stroke="#8a92a4" stroke-width="1"/><rect x="6" y="1" width="8" height="8" fill="#dfe2e8" stroke="#8a92a4" stroke-width="1"/><path d="M1 10h8" stroke="#8a92a4"/></g>
<g transform="translate(19,321)"><path d="M4 0v4h-4z" fill="#8a94a8"/></g>
<g transform="translate(19,396)"><path d="M4 0v4h-4z" fill="#8a94a8"/></g>
<g transform="translate(19,425)"><path d="M4 0v4h-4z" fill="#8a94a8"/></g>
<g transform="translate(19,456)"><path d="M4 0v4h-4z" fill="#8a94a8"/></g>
<g transform="translate(19,530)"><path d="M4 0v4h-4z" fill="#8a94a8"/></g>
<g transform="translate(19,574)"><path d="M4 0v4h-4z" fill="#8a94a8"/></g>
<g transform="translate(19,595)"><path d="M4 0v4h-4z" fill="#8a94a8"/></g>
<g transform="translate(19,661)"><path d="M4 0v4h-4z" fill="#8a94a8"/></g>
<g transform="translate(19,683)"><path d="M4 0v4h-4z" fill="#8a94a8"/></g>
<g transform="translate(19,704)"><path d="M4 0v4h-4z" fill="#8a94a8"/></g>
<g transform="translate(35,153)"><path d="M1 6l8-5 8 5v12h-16z" fill="#f7b870" stroke="#000" stroke-width="1"/><path d="M2 7h14v10h-14z" fill="#f0a050"/><path d="M4 1l3 3" stroke="#e00" stroke-width="2"/><circle cx="13" cy="13" r="5.5" fill="#fff" stroke="#e01010" stroke-width="2"/><path d="M13 9.5v4M13 15v1.5" stroke="#000" stroke-width="1.6"/></g>
<g transform="translate(59,173)"><path d="M4 2h9v9h-9z" fill="#9ad4f8" stroke="#0a1a80" stroke-width="1"/><path d="M2 4h9v9h-9z" fill="#bfe6ff" stroke="#0a1a80" stroke-width="1" opacity="0.9"/><path d="M2 13l-2 3M11 13h6" stroke="#0a7a50" stroke-width="1.1"/></g>
<g transform="translate(59,192)"><path d="M1 3l4 3" stroke="#e01010" stroke-width="2"/><path d="M3 1l3 2" stroke="#2a50c0" stroke-width="1.4"/><rect x="3" y="7" width="6" height="8" fill="#fff" stroke="#000"/><circle cx="12" cy="12" r="5" fill="#fff" stroke="#e01010" stroke-width="2"/><path d="M12 9v3.5M12 14v1.5" stroke="#000" stroke-width="1.5"/></g>
<g transform="translate(60,212)"><path d="M0 1l4 4" stroke="#e01010" stroke-width="2"/><path d="M5.5 15.5L15 5.5a3 3 0 0 0-4.5-4.5L1.5 10.5a3 3 0 0 0 4.5 4.5L13.5 7.5a1.6 1.6 0 0 0-2.5-2.5L4 12" stroke="#0a1a8a" stroke-width="1.7" fill="none" stroke-linecap="round"/></g>
<g transform="translate(83,233)"><path d="M5.5 15.5L15 5.5a3 3 0 0 0-4.5-4.5L1.5 10.5a3 3 0 0 0 4.5 4.5L13.5 7.5a1.6 1.6 0 0 0-2.5-2.5L4 12" stroke="#0a1a8a" stroke-width="1.7" fill="none" stroke-linecap="round"/></g>
<g transform="translate(83,253)"><path d="M5.5 15.5L15 5.5a3 3 0 0 0-4.5-4.5L1.5 10.5a3 3 0 0 0 4.5 4.5L13.5 7.5a1.6 1.6 0 0 0-2.5-2.5L4 12" stroke="#0a1a8a" stroke-width="1.7" fill="none" stroke-linecap="round"/></g>
<g transform="translate(83,293)"><path d="M5.5 15.5L15 5.5a3 3 0 0 0-4.5-4.5L1.5 10.5a3 3 0 0 0 4.5 4.5L13.5 7.5a1.6 1.6 0 0 0-2.5-2.5L4 12" stroke="#0a1a8a" stroke-width="1.7" fill="none" stroke-linecap="round"/></g>
<g transform="translate(83,313)"><path d="M5.5 15.5L15 5.5a3 3 0 0 0-4.5-4.5L1.5 10.5a3 3 0 0 0 4.5 4.5L13.5 7.5a1.6 1.6 0 0 0-2.5-2.5L4 12" stroke="#0a1a8a" stroke-width="1.7" fill="none" stroke-linecap="round"/></g>
<g transform="translate(82,272)"><rect x="0" y="0" width="6" height="6" fill="#e01010"/><rect x="9" y="10" width="8" height="8" fill="#2a9af0" stroke="#0a1a80"/><path d="M4 14L13 4a3 3 0 0 0-4-3L2 9a3 3 0 0 0 4 4l6-6" stroke="#555" stroke-width="1.8" fill="none"/></g>
<g transform="translate(32,126)"><rect x="1" y="0.5" width="3" height="3" fill="#fff" stroke="#000"/><path d="M2.5 3.5v11h4M2.5 7h4M5 7v7" stroke="#000" stroke-width="1.1" fill="none"/><rect x="6.5" y="5.5" width="3" height="3" fill="#fff" stroke="#000"/><rect x="9.5" y="8.5" width="3" height="3" fill="#fff" stroke="#000"/><rect x="9.5" y="11.5" width="3" height="3" fill="#fff" stroke="#000"/><rect x="6.5" y="13" width="3" height="3" fill="#fff" stroke="#000"/></g>
<g transform="translate(56,127)"><path d="M1 1h5M1 1v14h5M1 5h4M1 10h4" stroke="#000" stroke-width="1.3" fill="none"/><path d="M7 4l1.5 1.5 2.5-3M7 9l1.5 1.5 2.5-3" stroke="#1a3aa0" stroke-width="1.2" fill="none"/><path d="M12 4h3M12 9h3M12 13h3" stroke="#000" stroke-width="1.5"/></g>
<g transform="translate(76,133)"><path d="M0 0h6l-3 3z" fill="#000"/></g>
<g transform="translate(97,125)"><rect x="1.5" y="0.5" width="12" height="16" fill="#fff" stroke="#000" stroke-width="1.1"/><rect x="3" y="9" width="9" height="6" fill="#1a2a9a"/><path d="M5 3h5M5 5h5" stroke="#000"/></g>
<g transform="translate(118,126)"><rect x="0.5" y="0.5" width="9" height="13" fill="#eef0f4" stroke="#9aa2b2"/><rect x="6.5" y="3.5" width="9" height="12" fill="#eef0f4" stroke="#9aa2b2"/><path d="M2 3h5M2 5h5M8 7h6M8 9h6M8 11h6" stroke="#a4aab8" stroke-width="0.8"/></g>
<g stroke="#a0a0a0" stroke-width="1" stroke-dasharray="1 1" fill="none"><path d="M45.5 172v50M49 182h9M49 202h9M49 222h9M68.5 230v92M69 242h13M69 262h13M72 282h10M69 302h13M69 322h13"/></g>
<g transform="translate(41,178)"><rect x="0.5" y="0.5" width="8" height="8" fill="#f4f4f0" stroke="#a8a8a0"/><path d="M2.5 4.5h4" stroke="#000"/><path d="M4.5 2.5v4" stroke="#000"/></g>
<g transform="translate(41,198)"><rect x="0.5" y="0.5" width="8" height="8" fill="#f4f4f0" stroke="#a8a8a0"/><path d="M2.5 4.5h4" stroke="#000"/><path d="M4.5 2.5v4" stroke="#000"/></g>
<g transform="translate(41,218)"><rect x="0.5" y="0.5" width="8" height="8" fill="#f4f4f0" stroke="#a8a8a0"/><path d="M2.5 4.5h4" stroke="#000"/></g>
<g transform="translate(64,278)"><rect x="0.5" y="0.5" width="8" height="8" fill="#f4f4f0" stroke="#a8a8a0"/><path d="M2.5 4.5h4" stroke="#000"/><path d="M4.5 2.5v4" stroke="#000"/></g>
<g transform="translate(33,950)"><rect x="3" y="1" width="6" height="10" fill="#f4c030" stroke="#5a3a00"/><path d="M7 7l4-3h5v6l-4 3h-5z" fill="#2a8af0" stroke="#0a1a80"/><path d="M0 13l3-2M1 9l2 1M4 16l1-3M14 0l-1 3M16 3l-2 1" stroke="#000"/></g>
<g transform="translate(56,951)"><path d="M5.5 15.5L15 5.5a3 3 0 0 0-4.5-4.5L1.5 10.5a3 3 0 0 0 4.5 4.5L13.5 7.5a1.6 1.6 0 0 0-2.5-2.5L4 12" stroke="#0a1a8a" stroke-width="1.7" fill="none" stroke-linecap="round"/></g>
<g transform="translate(35,972)"><path d="M5 0h6l5 5v6l-5 5h-6l-5-5v-6z" fill="#e01818"/><text x="8" y="10.5" text-anchor="middle" font-family="Liberation Sans" font-size="5.5" font-weight="bold" fill="#fff">STOP</text></g>
<g transform="translate(58,972)"><path d="M0.5 0.5h13v11h-4l-2 4-1-4h-6z" fill="#fff" stroke="#0a1a60"/><text x="7" y="10" text-anchor="middle" font-family="Liberation Sans" font-size="11" font-weight="bold" fill="#0a1a60">?</text></g>
<g transform="translate(264,954)"><path d="M1 5l3-3h5v7l-3 3h-5z" fill="#eef2f8" stroke="#5a6478" stroke-width="0.9"/><path d="M7 8l3-3h4v6l-3 3h-4z" fill="#eef2f8" stroke="#5a6478" stroke-width="0.9"/></g>
<g transform="translate(286,954)"><path d="M1 5l3-3h5v7l-3 3h-5z" fill="#eef2f8" stroke="#5a6478" stroke-width="0.9"/><path d="M7 8l3-3h4v6l-3 3h-4z" fill="#eef2f8" stroke="#5a6478" stroke-width="0.9"/></g>
<g transform="translate(502,954)"><path d="M1 5l3-3h5v7l-3 3h-5z" fill="#eef2f8" stroke="#5a6478" stroke-width="0.9"/><path d="M7 8l3-3h4v6l-3 3h-4z" fill="#eef2f8" stroke="#5a6478" stroke-width="0.9"/></g>
<g transform="translate(524,954)"><path d="M1 5l3-3h5v7l-3 3h-5z" fill="#eef2f8" stroke="#5a6478" stroke-width="0.9"/><path d="M7 8l3-3h4v6l-3 3h-4z" fill="#eef2f8" stroke="#5a6478" stroke-width="0.9"/></g>
<g transform="translate(733,954)"><path d="M1 5l3-3h5v7l-3 3h-5z" fill="#eef2f8" stroke="#5a6478" stroke-width="0.9"/><path d="M7 8l3-3h4v6l-3 3h-4z" fill="#eef2f8" stroke="#5a6478" stroke-width="0.9"/></g>
<g transform="translate(755,954)"><path d="M1 5l3-3h5v7l-3 3h-5z" fill="#eef2f8" stroke="#5a6478" stroke-width="0.9"/><path d="M7 8l3-3h4v6l-3 3h-4z" fill="#eef2f8" stroke="#5a6478" stroke-width="0.9"/></g>
<g transform="translate(956,954)"><path d="M1 5l3-3h5v7l-3 3h-5z" fill="#eef2f8" stroke="#5a6478" stroke-width="0.9"/><path d="M7 8l3-3h4v6l-3 3h-4z" fill="#eef2f8" stroke="#5a6478" stroke-width="0.9"/></g>
<g transform="translate(978,954)"><path d="M1 5l3-3h5v7l-3 3h-5z" fill="#eef2f8" stroke="#5a6478" stroke-width="0.9"/><path d="M7 8l3-3h4v6l-3 3h-4z" fill="#eef2f8" stroke="#5a6478" stroke-width="0.9"/></g>
<g transform="translate(1001,954)"><path d="M1 5l3-3h5v7l-3 3h-5z" fill="#eef2f8" stroke="#5a6478" stroke-width="0.9"/><path d="M7 8l3-3h4v6l-3 3h-4z" fill="#eef2f8" stroke="#5a6478" stroke-width="0.9"/></g>
</svg>
</body></html>
